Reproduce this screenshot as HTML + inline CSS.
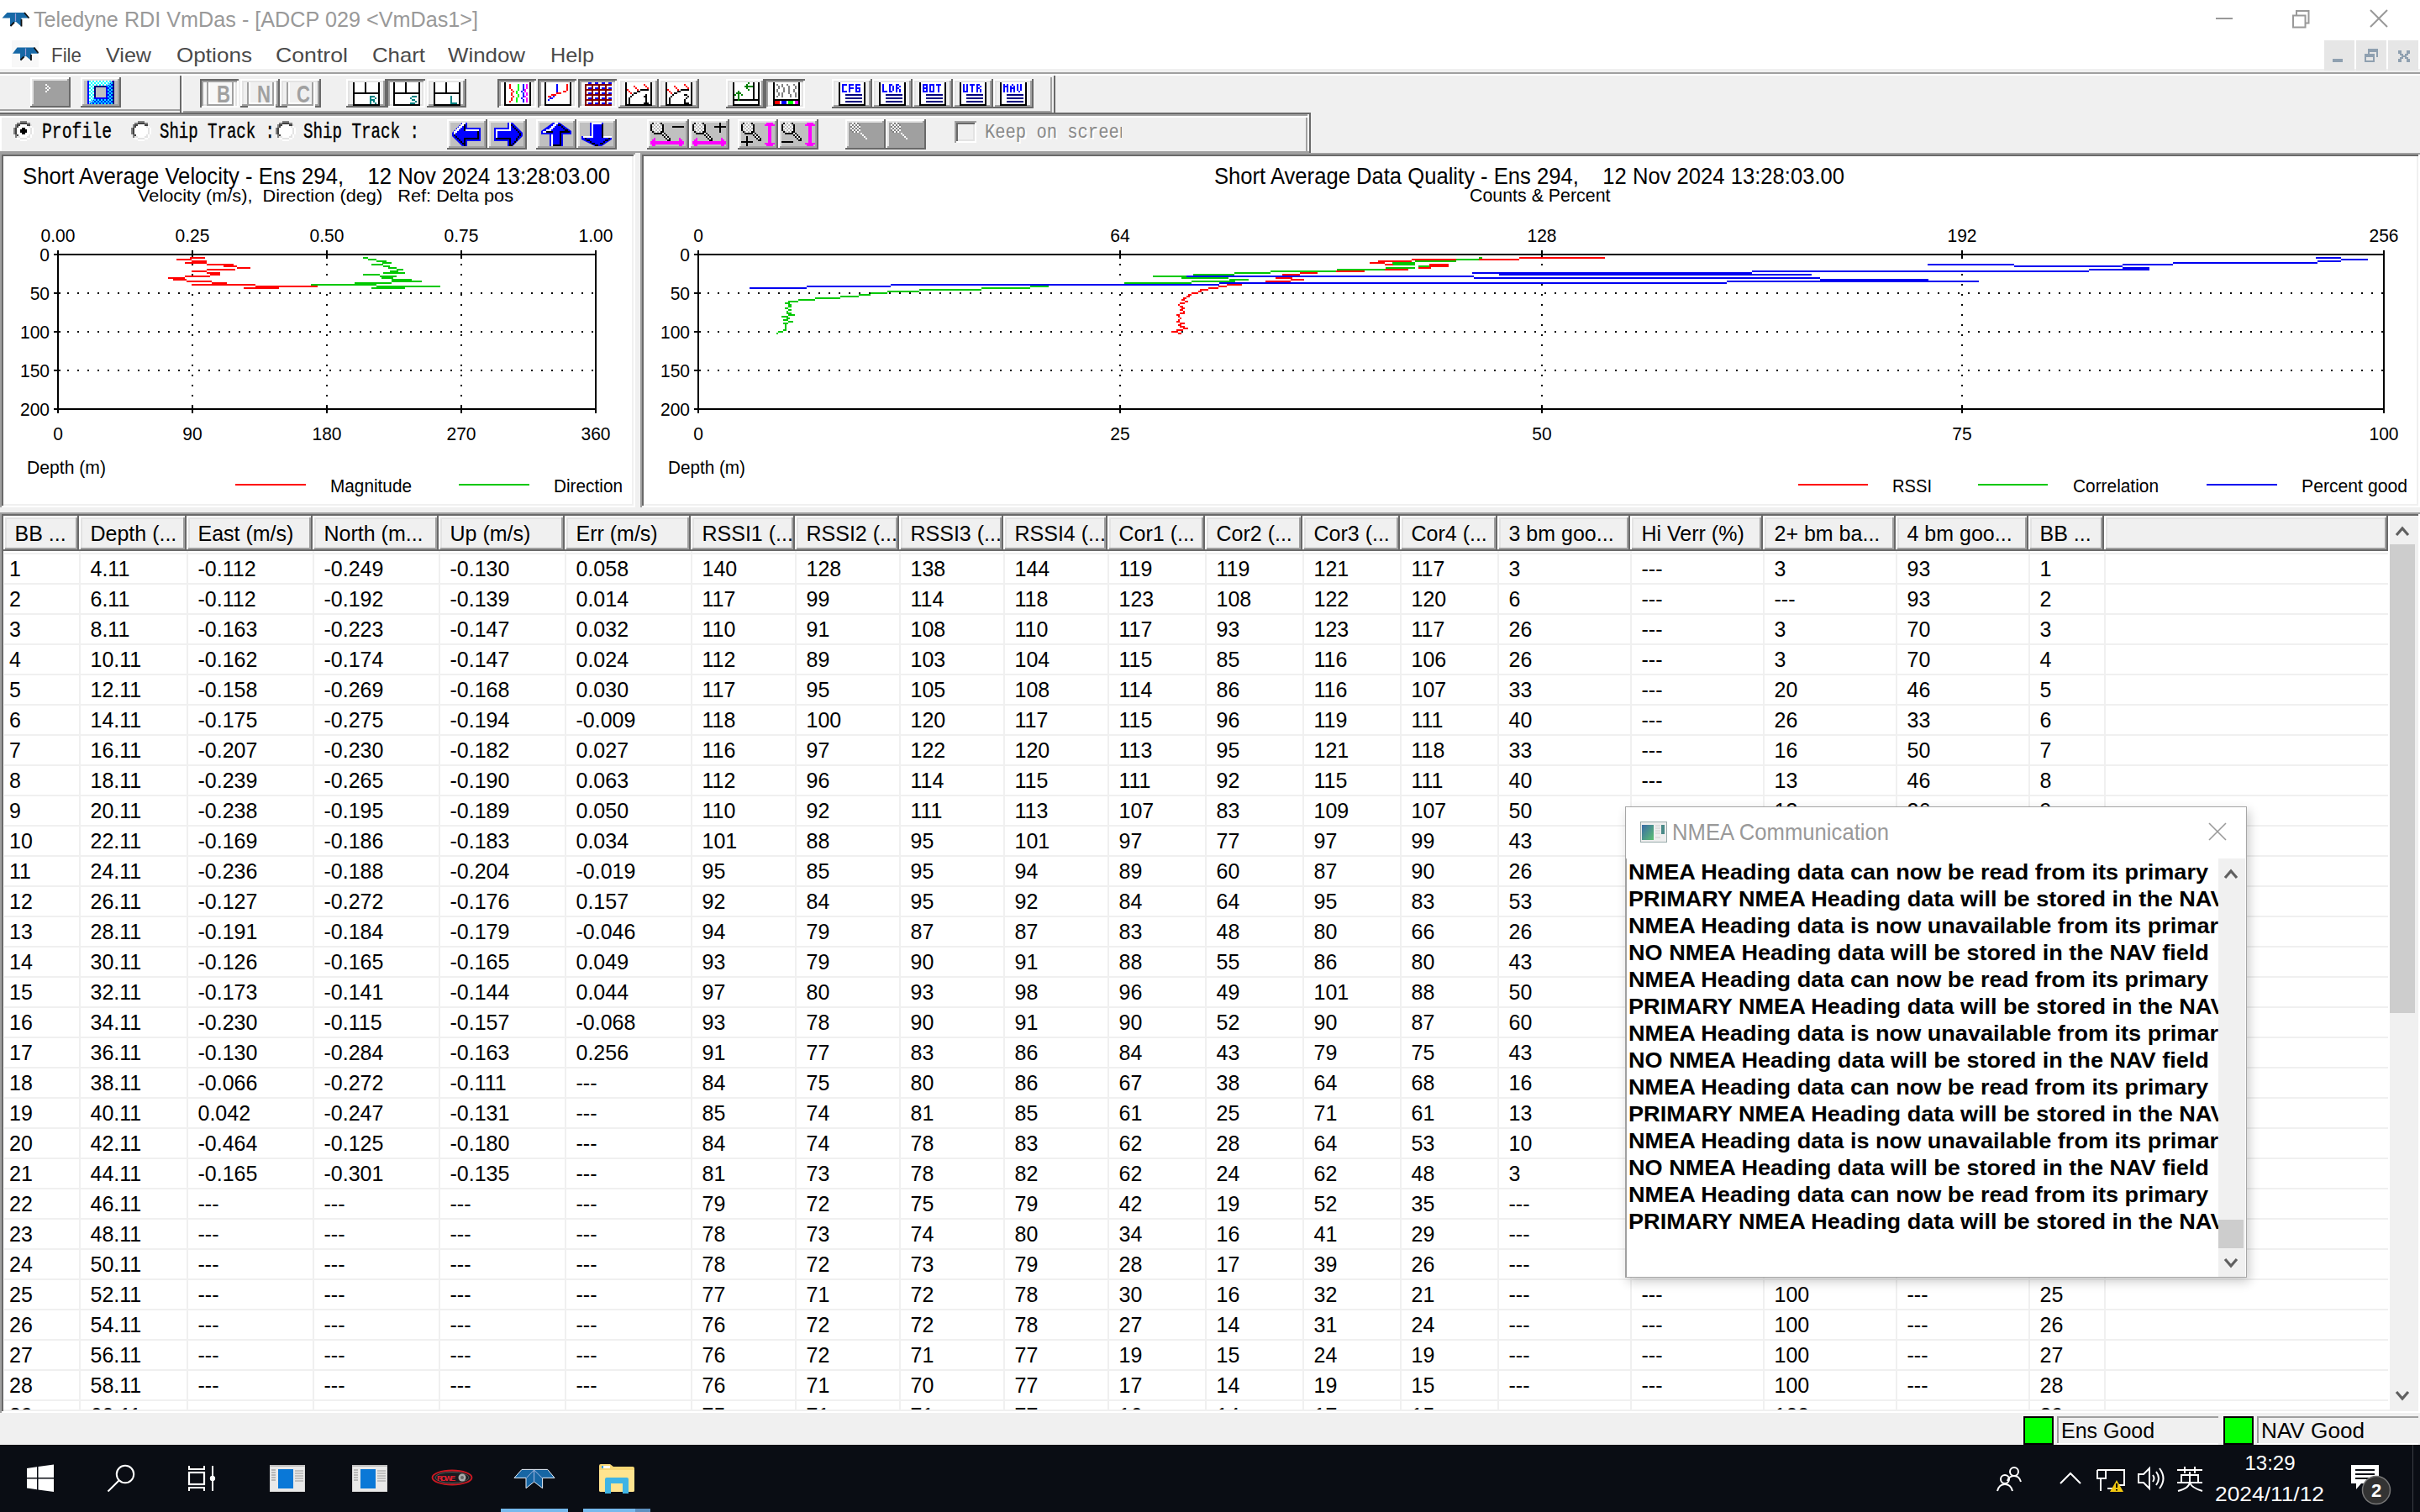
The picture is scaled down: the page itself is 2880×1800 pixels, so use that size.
<!DOCTYPE html><html><head><meta charset="utf-8"><style>*{margin:0;padding:0}html,body{width:2880px;height:1800px;overflow:hidden;background:#fff;font-family:"Liberation Sans", sans-serif}
.r{position:absolute}.t{position:absolute;white-space:pre;line-height:1;color:#000}</style></head><body><div class="r" style="left:0px;top:0px;width:2880px;height:82px;background:#fff;"></div><div class="r" style="left:0px;top:82px;width:2880px;height:4px;background:#f0f0f0;"></div><div class="r" style="left:0px;top:86px;width:2880px;height:2px;background:#a0a0a0;"></div><div class="r" style="left:0px;top:88px;width:2880px;height:2px;background:#fff;"></div><div class="r" style="left:0px;top:90px;width:2880px;height:92px;background:#f0f0f0;"></div><svg class="r" style="left:2px;top:13px" width="34" height="20" viewBox="0 0 34 20"><path d="M0.5 8.5 L6.5 2 H27 L32.5 8.5 H23.5 V18.5 L16.5 12.5 L10 18.5 V8.5 Z" fill="#1668a6"/><path d="M16.5 3 V12" stroke="#9a9ad8" stroke-width="1.2"/><path d="M27 2 L32.5 8.5 M23.5 10 V18.5 M10.5 18 L15 13.5" fill="none" stroke="#111" stroke-width="1.8"/></svg><div class="t" style="left:40.00px;top:10.84px;font-size:25px;color:#999;transform:scale(1.0081,1.0000);transform-origin:0 21.16px;">Teledyne RDI VmDas - [ADCP 029 &lt;VmDas1&gt;]</div><div class="r" style="left:2637px;top:21px;width:20px;height:2px;background:#999;"></div><svg class="r" style="left:2726px;top:10px" width="24" height="24" viewBox="0 0 24 24"><path d="M3 8.5 H17.5 V22.5 H3 Z M7 8 V3 H21.5 V17.5 H17.5" fill="none" stroke="#999" stroke-width="2"/></svg><svg class="r" style="left:2819px;top:10px" width="24" height="24" viewBox="0 0 24 24"><path d="M2 2 L22 22 M22 2 L2 22" stroke="#999" stroke-width="2"/></svg><svg class="r" style="left:14px;top:48px" width="32" height="32" viewBox="0 0 32 32"><rect width="32" height="32" fill="#f8f8f8"/><path d="M1 15.8 L6.5 8.5 H26.5 L32 15.8 H23 V24 L16.5 18.5 L10 24 V15.8 Z" fill="#1668a6"/><path d="M16.5 9.5 V18" stroke="#9a9ad8" stroke-width="1.2"/><path d="M26.5 8.5 L31.5 15 M23 17 V24 M10.5 23.5 L14.5 19.5" fill="none" stroke="#111" stroke-width="1.8"/></svg><div class="t" style="left:61.00px;top:53.68px;font-size:24px;color:#4a4a4a;transform:scale(0.9308,1.0000);transform-origin:0 20.32px;">File</div><div class="t" style="left:126.00px;top:53.68px;font-size:24px;color:#4a4a4a;transform:scale(1.0467,1.0000);transform-origin:0 20.32px;">View</div><div class="t" style="left:209.50px;top:53.68px;font-size:24px;color:#4a4a4a;transform:scale(1.0881,1.0000);transform-origin:0 20.32px;">Options</div><div class="t" style="left:328.00px;top:53.68px;font-size:24px;color:#4a4a4a;transform:scale(1.1115,1.0000);transform-origin:0 20.32px;">Control</div><div class="t" style="left:443.00px;top:53.68px;font-size:24px;color:#4a4a4a;transform:scale(1.0734,1.0000);transform-origin:0 20.32px;">Chart</div><div class="t" style="left:532.60px;top:53.68px;font-size:24px;color:#4a4a4a;transform:scale(1.0777,1.0000);transform-origin:0 20.32px;">Window</div><div class="t" style="left:654.60px;top:53.68px;font-size:24px;color:#4a4a4a;transform:scale(1.0534,1.0000);transform-origin:0 20.32px;">Help</div><div class="r" style="left:2766px;top:48px;width:36px;height:36px;background:#e6e6e6;"></div><div class="r" style="left:2804px;top:48px;width:36px;height:36px;background:#e6e6e6;"></div><div class="r" style="left:2842px;top:48px;width:36px;height:36px;background:#e6e6e6;"></div><div class="r" style="left:2776px;top:70px;width:12px;height:4px;background:#8fa0b0;"></div><svg class="r" style="left:2814px;top:58px" width="16" height="16" viewBox="0 0 16 16" fill="#8fa0b0"><path d="M4 0 H16 V10 H14 V4 H6 V6 H4 Z"/><path d="M0 6 H12 V16 H0 Z M2 10 V14 H10 V10 Z" fill-rule="evenodd"/></svg><svg class="r" style="left:2854px;top:60px" width="14" height="14" viewBox="0 0 14 14" fill="#8fa0b0"><rect x="0" y="0" width="2" height="2"/><rect x="2" y="0" width="2" height="2"/><rect x="10" y="0" width="2" height="2"/><rect x="12" y="0" width="2" height="2"/><rect x="0" y="2" width="2" height="2"/><rect x="2" y="2" width="2" height="2"/><rect x="10" y="2" width="2" height="2"/><rect x="12" y="2" width="2" height="2"/><rect x="2" y="4" width="2" height="2"/><rect x="4" y="4" width="2" height="2"/><rect x="8" y="4" width="2" height="2"/><rect x="10" y="4" width="2" height="2"/><rect x="4" y="6" width="2" height="2"/><rect x="6" y="6" width="2" height="2"/><rect x="8" y="6" width="2" height="2"/><rect x="2" y="8" width="2" height="2"/><rect x="4" y="8" width="2" height="2"/><rect x="8" y="8" width="2" height="2"/><rect x="10" y="8" width="2" height="2"/><rect x="0" y="10" width="2" height="2"/><rect x="2" y="10" width="2" height="2"/><rect x="10" y="10" width="2" height="2"/><rect x="12" y="10" width="2" height="2"/><rect x="0" y="12" width="2" height="2"/><rect x="2" y="12" width="2" height="2"/><rect x="10" y="12" width="2" height="2"/><rect x="12" y="12" width="2" height="2"/></svg><div class="r" style="left:214px;top:90px;width:2px;height:44px;background:#696969;"></div><div class="r" style="left:0px;top:130px;width:214px;height:2px;background:#a0a0a0;"></div><div class="r" style="left:216px;top:90px;width:2px;height:44px;background:#fff;"></div><div class="r" style="left:1250px;top:92px;width:2px;height:40px;background:#a0a0a0;"></div><div class="r" style="left:1254px;top:90px;width:2px;height:44px;background:#696969;"></div><div class="r" style="left:218px;top:132px;width:1034px;height:2px;background:#a0a0a0;"></div><div class="r" style="left:0px;top:134px;width:1560px;height:2px;background:#696969;"></div><div class="r" style="left:0px;top:136px;width:1556px;height:2px;background:#a0a0a0;"></div><div class="r" style="left:0px;top:138px;width:1556px;height:2px;background:#fff;"></div><div class="r" style="left:0px;top:140px;width:2px;height:40px;background:#fff;"></div><div class="r" style="left:1554px;top:140px;width:2px;height:40px;background:#a0a0a0;"></div><div class="r" style="left:1556px;top:138px;width:2px;height:42px;background:#fff;"></div><div class="r" style="left:1558px;top:134px;width:2px;height:48px;background:#696969;"></div><div class="r" style="left:0px;top:180px;width:1558px;height:2px;background:#a0a0a0;"></div><div class="r" style="left:36px;top:92px;width:48px;height:36px;background:#a0a0a0;box-shadow:inset -2px -2px #696969,inset 2px 2px #fff,inset -4px -4px #a0a0a0,inset 4px 4px #e3e3e3;"></div><svg class="r" style="left:36px;top:92px" width="48" height="36" viewBox="0 0 48 36"><rect x="18" y="8" width="2" height="2" fill="#fff"/><rect x="20" y="10" width="2" height="2" fill="#fff"/><rect x="22" y="12" width="2" height="2" fill="#fff"/><rect x="20" y="14" width="2" height="2" fill="#fff"/><rect x="18" y="16" width="2" height="2" fill="#fff"/><rect x="18" y="12" width="2" height="2" fill="#fff"/></svg><div class="r" style="left:96px;top:92px;width:48px;height:36px;background:#c0c0c0;box-shadow:inset -2px -2px #696969,inset 2px 2px #fff,inset -4px -4px #a0a0a0,inset 4px 4px #e3e3e3;"></div><svg class="r" style="left:96px;top:92px" width="48" height="36" viewBox="0 0 48 36"><defs><pattern id="pw" width="4" height="4" patternUnits="userSpaceOnUse" x="10" y="4"><rect width="4" height="4" fill="#fff"/><rect width="2" height="2" fill="#00ffff"/><rect x="2" y="2" width="2" height="2" fill="#00ffff"/></pattern><pattern id="pb" width="4" height="4" patternUnits="userSpaceOnUse" x="10" y="4"><rect width="4" height="4" fill="#0000ff"/><rect width="2" height="2" fill="#00ffff"/><rect x="2" y="2" width="2" height="2" fill="#00ffff"/></pattern></defs><rect x="10" y="4" width="28" height="28" fill="url(#pb)"/><path d="M10 4 H38 L10 32 Z" fill="url(#pw)"/><rect x="8" y="4" width="2" height="28" fill="#0000ff"/><rect x="38" y="4" width="2" height="28" fill="#000080"/><rect x="16" y="10" width="16" height="16" fill="#0000ff"/><path d="M16 10 H30 V12 H18 V24 H16 Z" fill="#000080"/><rect x="18" y="12" width="12" height="12" fill="#c0c0c0"/></svg><div class="r" style="left:238px;top:94px;width:46px;height:34px;background:#f7f7f7;box-shadow:inset 2px 2px #696969,inset -2px -2px #fff,inset 4px 4px #a0a0a0,inset -4px -4px #e3e3e3;"></div><svg class="r" style="left:238px;top:94px" width="46" height="34" viewBox="0 0 46 34"><path d="M9 4 V31 H39 V4" fill="none" stroke="#a0a0a0" stroke-width="2"/><path d="M11 4 V29 H37" fill="none" stroke="#fff" stroke-width="2"/><path d="M41 4 V33 H9" fill="none" stroke="#fff" stroke-width="2"/></svg><div class="t" style="left:258.00px;top:99.99px;font-size:26px;color:#a0a0a0;font-weight:bold;transform:scale(0.8521,1.1181);transform-origin:0 22.01px;">B</div><div class="r" style="left:286px;top:94px;width:47px;height:34px;background:#f0f0f0;box-shadow:inset -2px -2px #696969,inset 2px 2px #fff,inset -4px -4px #a0a0a0,inset 4px 4px #e3e3e3;"></div><svg class="r" style="left:286px;top:94px" width="47" height="34" viewBox="0 0 47 34"><path d="M9 4 V31 H39 V4" fill="none" stroke="#a0a0a0" stroke-width="2"/><path d="M11 4 V29 H37" fill="none" stroke="#fff" stroke-width="2"/><path d="M41 4 V33 H9" fill="none" stroke="#fff" stroke-width="2"/></svg><div class="t" style="left:306.00px;top:99.99px;font-size:26px;color:#a0a0a0;font-weight:bold;transform:scale(0.8521,1.1181);transform-origin:0 22.01px;">N</div><div class="r" style="left:333px;top:94px;width:49px;height:34px;background:#f0f0f0;box-shadow:inset -2px -2px #696969,inset 2px 2px #fff,inset -4px -4px #a0a0a0,inset 4px 4px #e3e3e3;"></div><svg class="r" style="left:333px;top:94px" width="49" height="34" viewBox="0 0 49 34"><path d="M9 4 V31 H39 V4" fill="none" stroke="#a0a0a0" stroke-width="2"/><path d="M11 4 V29 H37" fill="none" stroke="#fff" stroke-width="2"/><path d="M41 4 V33 H9" fill="none" stroke="#fff" stroke-width="2"/></svg><div class="t" style="left:353.00px;top:99.99px;font-size:26px;color:#a0a0a0;font-weight:bold;transform:scale(0.8521,1.1181);transform-origin:0 22.01px;">C</div><div class="r" style="left:412px;top:94px;width:48px;height:34px;background:#f0f0f0;box-shadow:inset -2px -2px #696969,inset 2px 2px #fff,inset -4px -4px #a0a0a0,inset 4px 4px #e3e3e3;"></div><svg class="r" style="left:412px;top:94px" width="48" height="34" viewBox="0 0 48 34"><rect x="8" y="4" width="32" height="28" fill="#fff"/><rect x="8" y="4" width="2" height="28" fill="#000"/><rect x="38" y="4" width="2" height="28" fill="#000"/><rect x="8" y="30" width="32" height="2" fill="#000"/><rect x="8" y="16" width="32" height="2" fill="#000"/><rect x="22" y="4" width="2" height="12" fill="#000"/><rect x="28" y="20" width="2" height="2" fill="#008080"/><rect x="30" y="20" width="2" height="2" fill="#008080"/><rect x="32" y="20" width="2" height="2" fill="#008080"/><rect x="28" y="22" width="2" height="2" fill="#008080"/><rect x="34" y="22" width="2" height="2" fill="#008080"/><rect x="28" y="24" width="2" height="2" fill="#008080"/><rect x="30" y="24" width="2" height="2" fill="#008080"/><rect x="32" y="24" width="2" height="2" fill="#008080"/><rect x="28" y="26" width="2" height="2" fill="#008080"/><rect x="32" y="26" width="2" height="2" fill="#008080"/><rect x="28" y="28" width="2" height="2" fill="#008080"/><rect x="34" y="28" width="2" height="2" fill="#008080"/></svg><div class="r" style="left:460px;top:94px;width:46px;height:34px;background:#f7f7f7;box-shadow:inset 2px 2px #696969,inset -2px -2px #fff,inset 4px 4px #a0a0a0,inset -4px -4px #e3e3e3;"></div><svg class="r" style="left:460px;top:94px" width="46" height="34" viewBox="0 0 46 34"><rect x="8" y="4" width="32" height="28" fill="#fff"/><rect x="8" y="4" width="2" height="28" fill="#000"/><rect x="38" y="4" width="2" height="28" fill="#000"/><rect x="8" y="30" width="32" height="2" fill="#000"/><rect x="8" y="16" width="32" height="2" fill="#000"/><rect x="22" y="4" width="2" height="12" fill="#000"/><rect x="30" y="20" width="2" height="2" fill="#008080"/><rect x="32" y="20" width="2" height="2" fill="#008080"/><rect x="34" y="20" width="2" height="2" fill="#008080"/><rect x="28" y="22" width="2" height="2" fill="#008080"/><rect x="30" y="24" width="2" height="2" fill="#008080"/><rect x="32" y="24" width="2" height="2" fill="#008080"/><rect x="34" y="26" width="2" height="2" fill="#008080"/><rect x="28" y="28" width="2" height="2" fill="#008080"/><rect x="30" y="28" width="2" height="2" fill="#008080"/><rect x="32" y="28" width="2" height="2" fill="#008080"/></svg><div class="r" style="left:508px;top:94px;width:47px;height:34px;background:#f0f0f0;box-shadow:inset -2px -2px #696969,inset 2px 2px #fff,inset -4px -4px #a0a0a0,inset 4px 4px #e3e3e3;"></div><svg class="r" style="left:508px;top:94px" width="47" height="34" viewBox="0 0 47 34"><rect x="8" y="4" width="32" height="28" fill="#fff"/><rect x="8" y="4" width="2" height="28" fill="#000"/><rect x="38" y="4" width="2" height="28" fill="#000"/><rect x="8" y="30" width="32" height="2" fill="#000"/><rect x="8" y="16" width="32" height="2" fill="#000"/><rect x="22" y="4" width="2" height="12" fill="#000"/><rect x="28" y="20" width="2" height="2" fill="#008080"/><rect x="28" y="22" width="2" height="2" fill="#008080"/><rect x="28" y="24" width="2" height="2" fill="#008080"/><rect x="28" y="26" width="2" height="2" fill="#008080"/><rect x="28" y="28" width="2" height="2" fill="#008080"/><rect x="30" y="28" width="2" height="2" fill="#008080"/><rect x="32" y="28" width="2" height="2" fill="#008080"/><rect x="34" y="28" width="2" height="2" fill="#008080"/></svg><div class="r" style="left:592px;top:94px;width:46px;height:34px;background:#f7f7f7;box-shadow:inset 2px 2px #696969,inset -2px -2px #fff,inset 4px 4px #a0a0a0,inset -4px -4px #e3e3e3;"></div><svg class="r" style="left:592px;top:94px" width="46" height="34" viewBox="0 0 46 34"><rect x="8" y="4" width="32" height="28" fill="#fff"/><rect x="8" y="4" width="2" height="28" fill="#000"/><rect x="38" y="4" width="2" height="28" fill="#000"/><rect x="8" y="30" width="32" height="2" fill="#000"/><rect x="14" y="6" width="2" height="6" fill="#ff0000"/><rect x="16" y="12" width="2" height="2" fill="#ff0000"/><rect x="18" y="14" width="2" height="2" fill="#ff0000"/><rect x="16" y="16" width="2" height="4" fill="#ff0000"/><rect x="18" y="20" width="2" height="2" fill="#ff0000"/><rect x="16" y="22" width="2" height="4" fill="#ff0000"/><rect x="14" y="26" width="2" height="2" fill="#ff0000"/><rect x="24" y="6" width="2" height="8" fill="#00ff00"/><rect x="22" y="14" width="2" height="4" fill="#00ff00"/><rect x="24" y="18" width="2" height="4" fill="#00ff00"/><rect x="22" y="22" width="2" height="6" fill="#00ff00"/><rect x="30" y="6" width="2" height="8" fill="#0000ff"/><rect x="28" y="14" width="2" height="2" fill="#0000ff"/><rect x="30" y="16" width="2" height="6" fill="#0000ff"/><rect x="28" y="22" width="2" height="2" fill="#0000ff"/><rect x="30" y="24" width="2" height="4" fill="#0000ff"/><rect x="34" y="6" width="2" height="6" fill="#ff00ff"/><rect x="32" y="12" width="2" height="4" fill="#ff00ff"/><rect x="34" y="16" width="2" height="4" fill="#ff00ff"/><rect x="32" y="20" width="2" height="2" fill="#ff00ff"/><rect x="34" y="22" width="2" height="6" fill="#ff00ff"/></svg><div class="r" style="left:640px;top:94px;width:46px;height:34px;background:#f7f7f7;box-shadow:inset 2px 2px #696969,inset -2px -2px #fff,inset 4px 4px #a0a0a0,inset -4px -4px #e3e3e3;"></div><svg class="r" style="left:640px;top:94px" width="46" height="34" viewBox="0 0 46 34"><rect x="8" y="4" width="32" height="28" fill="#fff"/><rect x="8" y="4" width="2" height="28" fill="#000"/><rect x="38" y="4" width="2" height="28" fill="#000"/><rect x="8" y="30" width="32" height="2" fill="#000"/><rect x="22" y="6" width="2" height="10" fill="#0000ff"/><rect x="34" y="6" width="2" height="8" fill="#ff0000"/><rect x="30" y="14" width="4" height="2" fill="#ff0000"/><rect x="22" y="16" width="6" height="2" fill="#ff0000"/><rect x="16" y="18" width="6" height="2" fill="#ff0000"/><rect x="12" y="20" width="4" height="2" fill="#ff0000"/><rect x="18" y="20" width="2" height="2" fill="#0000ff"/><rect x="14" y="22" width="4" height="2" fill="#0000ff"/><rect x="12" y="24" width="2" height="2" fill="#0000ff"/></svg><div class="r" style="left:688px;top:94px;width:46px;height:34px;background:#f7f7f7;box-shadow:inset 2px 2px #696969,inset -2px -2px #fff,inset 4px 4px #a0a0a0,inset -4px -4px #e3e3e3;"></div><svg class="r" style="left:688px;top:94px" width="46" height="34" viewBox="0 0 46 34"><rect x="8" y="6" width="32" height="26" fill="#800000"/><rect x="12" y="4" width="4" height="2" fill="#0000ff"/><rect x="10" y="8" width="6" height="4" fill="#fff"/><rect x="12" y="10" width="4" height="2" fill="#0000ff"/><rect x="10" y="14" width="6" height="4" fill="#fff"/><rect x="12" y="16" width="4" height="2" fill="#0000ff"/><rect x="10" y="20" width="6" height="4" fill="#fff"/><rect x="12" y="22" width="4" height="2" fill="#0000ff"/><rect x="10" y="26" width="6" height="4" fill="#fff"/><rect x="12" y="28" width="4" height="2" fill="#0000ff"/><rect x="20" y="4" width="4" height="2" fill="#0000ff"/><rect x="18" y="8" width="6" height="4" fill="#fff"/><rect x="20" y="10" width="4" height="2" fill="#0000ff"/><rect x="18" y="14" width="6" height="4" fill="#fff"/><rect x="20" y="16" width="4" height="2" fill="#0000ff"/><rect x="18" y="20" width="6" height="4" fill="#fff"/><rect x="20" y="22" width="4" height="2" fill="#0000ff"/><rect x="18" y="26" width="6" height="4" fill="#fff"/><rect x="20" y="28" width="4" height="2" fill="#0000ff"/><rect x="28" y="4" width="4" height="2" fill="#0000ff"/><rect x="26" y="8" width="6" height="4" fill="#fff"/><rect x="28" y="10" width="4" height="2" fill="#0000ff"/><rect x="26" y="14" width="6" height="4" fill="#fff"/><rect x="28" y="16" width="4" height="2" fill="#0000ff"/><rect x="26" y="20" width="6" height="4" fill="#fff"/><rect x="28" y="22" width="4" height="2" fill="#0000ff"/><rect x="26" y="26" width="6" height="4" fill="#fff"/><rect x="28" y="28" width="4" height="2" fill="#0000ff"/><rect x="36" y="4" width="4" height="2" fill="#0000ff"/><rect x="34" y="8" width="6" height="4" fill="#fff"/><rect x="36" y="10" width="4" height="2" fill="#0000ff"/><rect x="34" y="14" width="6" height="4" fill="#fff"/><rect x="36" y="16" width="4" height="2" fill="#0000ff"/><rect x="34" y="20" width="6" height="4" fill="#fff"/><rect x="36" y="22" width="4" height="2" fill="#0000ff"/><rect x="34" y="26" width="6" height="4" fill="#fff"/><rect x="36" y="28" width="4" height="2" fill="#0000ff"/></svg><div class="r" style="left:736px;top:94px;width:48px;height:35px;background:#f0f0f0;box-shadow:inset -2px -2px #696969,inset 2px 2px #fff,inset -4px -4px #a0a0a0,inset 4px 4px #e3e3e3;"></div><svg class="r" style="left:736px;top:94px" width="48" height="35" viewBox="0 0 48 35"><rect x="8" y="4" width="32" height="28" fill="#fff"/><rect x="8" y="4" width="2" height="28" fill="#000"/><rect x="38" y="4" width="2" height="28" fill="#000"/><rect x="8" y="30" width="32" height="2" fill="#000"/><rect x="10" y="12" width="2" height="2" fill="#ff0000"/><rect x="12" y="14" width="2" height="2" fill="#ff0000"/><rect x="14" y="16" width="2" height="2" fill="#ff0000"/><rect x="18" y="8" width="2" height="2" fill="#ff0000"/><rect x="20" y="10" width="2" height="2" fill="#ff0000"/><rect x="22" y="12" width="2" height="2" fill="#ff0000"/><rect x="30" y="6" width="2" height="2" fill="#ff0000"/><rect x="32" y="8" width="2" height="2" fill="#ff0000"/><rect x="34" y="10" width="2" height="2" fill="#ff0000"/><rect x="16" y="18" width="2" height="2" fill="#000"/><rect x="14" y="20" width="2" height="2" fill="#000"/><rect x="12" y="22" width="2" height="8" fill="#000"/><rect x="18" y="16" width="4" height="2" fill="#000"/><rect x="22" y="14" width="4" height="2" fill="#000"/><rect x="26" y="12" width="10" height="2" fill="#000"/><rect x="32" y="18" width="2" height="12" fill="#000"/><rect x="30" y="20" width="2" height="2" fill="#000"/><rect x="30" y="28" width="6" height="2" fill="#000"/></svg><div class="r" style="left:784px;top:94px;width:48px;height:35px;background:#f0f0f0;box-shadow:inset -2px -2px #696969,inset 2px 2px #fff,inset -4px -4px #a0a0a0,inset 4px 4px #e3e3e3;"></div><svg class="r" style="left:784px;top:94px" width="48" height="35" viewBox="0 0 48 35"><rect x="8" y="4" width="32" height="28" fill="#fff"/><rect x="8" y="4" width="2" height="28" fill="#000"/><rect x="38" y="4" width="2" height="28" fill="#000"/><rect x="8" y="30" width="32" height="2" fill="#000"/><rect x="10" y="12" width="2" height="2" fill="#ff0000"/><rect x="12" y="14" width="2" height="2" fill="#ff0000"/><rect x="14" y="16" width="2" height="2" fill="#ff0000"/><rect x="18" y="8" width="2" height="2" fill="#ff0000"/><rect x="20" y="10" width="2" height="2" fill="#ff0000"/><rect x="22" y="12" width="2" height="2" fill="#ff0000"/><rect x="30" y="6" width="2" height="2" fill="#ff0000"/><rect x="32" y="8" width="2" height="2" fill="#ff0000"/><rect x="34" y="10" width="2" height="2" fill="#ff0000"/><rect x="16" y="18" width="2" height="2" fill="#000"/><rect x="14" y="20" width="2" height="2" fill="#000"/><rect x="12" y="22" width="2" height="8" fill="#000"/><rect x="18" y="16" width="4" height="2" fill="#000"/><rect x="22" y="14" width="4" height="2" fill="#000"/><rect x="26" y="12" width="10" height="2" fill="#000"/><rect x="30" y="18" width="4" height="2" fill="#000"/><rect x="34" y="20" width="2" height="2" fill="#000"/><rect x="32" y="22" width="2" height="2" fill="#000"/><rect x="30" y="24" width="2" height="4" fill="#000"/><rect x="30" y="28" width="6" height="2" fill="#000"/></svg><div class="r" style="left:864px;top:94px;width:46px;height:35px;background:#f0f0f0;box-shadow:inset -2px -2px #696969,inset 2px 2px #fff,inset -4px -4px #a0a0a0,inset 4px 4px #e3e3e3;"></div><svg class="r" style="left:864px;top:94px" width="46" height="35" viewBox="0 0 46 35"><rect x="8" y="4" width="32" height="28" fill="#fff"/><rect x="8" y="4" width="2" height="28" fill="#000"/><rect x="38" y="4" width="2" height="28" fill="#000"/><rect x="8" y="30" width="32" height="2" fill="#000"/><rect x="8" y="24" width="32" height="2" fill="#000"/><rect x="32" y="4" width="2" height="22" fill="#000"/><rect x="14" y="14" width="2" height="12" fill="#008000"/><rect x="12" y="16" width="2" height="2" fill="#008000"/><rect x="16" y="16" width="2" height="2" fill="#008000"/><rect x="10" y="18" width="2" height="2" fill="#008000"/><rect x="18" y="18" width="2" height="2" fill="#008000"/><rect x="22" y="8" width="10" height="2" fill="#008000"/><rect x="24" y="6" width="2" height="2" fill="#008000"/><rect x="24" y="10" width="2" height="2" fill="#008000"/><rect x="26" y="4" width="2" height="2" fill="#008000"/><rect x="26" y="12" width="2" height="2" fill="#008000"/></svg><div class="r" style="left:910px;top:94px;width:48px;height:35px;background:#f7f7f7;box-shadow:inset 2px 2px #696969,inset -2px -2px #fff,inset 4px 4px #a0a0a0,inset -4px -4px #e3e3e3;"></div><svg class="r" style="left:910px;top:94px" width="48" height="35" viewBox="0 0 48 35"><rect x="10" y="4" width="32" height="28" fill="#fff"/><rect x="10" y="4" width="2" height="28" fill="#000"/><rect x="40" y="4" width="2" height="28" fill="#000"/><rect x="10" y="30" width="32" height="2" fill="#000"/><rect x="10" y="24" width="32" height="2" fill="#000"/><rect x="12" y="26" width="6" height="4" fill="#ff0000"/><rect x="20" y="26" width="6" height="4" fill="#0000ff"/><rect x="28" y="26" width="6" height="4" fill="#00ff00"/><rect x="36" y="26" width="4" height="4" fill="#ff00ff"/><rect x="14" y="6" width="2" height="2" fill="#808080"/><rect x="16" y="8" width="2" height="4" fill="#808080"/><rect x="14" y="12" width="2" height="4" fill="#808080"/><rect x="16" y="16" width="2" height="4" fill="#808080"/><rect x="14" y="20" width="2" height="2" fill="#808080"/><rect x="20" y="6" width="2" height="4" fill="#808080"/><rect x="22" y="10" width="2" height="6" fill="#808080"/><rect x="20" y="16" width="2" height="6" fill="#808080"/><rect x="26" y="6" width="2" height="2" fill="#808080"/><rect x="28" y="8" width="2" height="10" fill="#808080"/><rect x="30" y="18" width="2" height="4" fill="#808080"/><rect x="34" y="6" width="2" height="2" fill="#808080"/><rect x="36" y="8" width="2" height="4" fill="#808080"/><rect x="34" y="12" width="2" height="4" fill="#808080"/><rect x="36" y="16" width="2" height="6" fill="#808080"/></svg><div class="r" style="left:990px;top:94px;width:48px;height:35px;background:#f0f0f0;box-shadow:inset -2px -2px #696969,inset 2px 2px #fff,inset -4px -4px #a0a0a0,inset 4px 4px #e3e3e3;"></div><svg class="r" style="left:990px;top:94px" width="48" height="35" viewBox="0 0 48 35"><rect x="8" y="4" width="32" height="28" fill="#fff"/><rect x="8" y="4" width="2" height="28" fill="#000"/><rect x="38" y="4" width="2" height="28" fill="#000"/><rect x="8" y="30" width="32" height="2" fill="#000"/><rect x="12" y="6" width="2" height="2" fill="#0000ff"/><rect x="14" y="6" width="2" height="2" fill="#0000ff"/><rect x="16" y="6" width="2" height="2" fill="#0000ff"/><rect x="12" y="8" width="2" height="2" fill="#0000ff"/><rect x="12" y="10" width="2" height="2" fill="#0000ff"/><rect x="12" y="12" width="2" height="2" fill="#0000ff"/><rect x="12" y="14" width="2" height="2" fill="#0000ff"/><rect x="14" y="14" width="2" height="2" fill="#0000ff"/><rect x="16" y="14" width="2" height="2" fill="#0000ff"/><rect x="20" y="6" width="2" height="2" fill="#0000ff"/><rect x="22" y="6" width="2" height="2" fill="#0000ff"/><rect x="24" y="6" width="2" height="2" fill="#0000ff"/><rect x="20" y="8" width="2" height="2" fill="#0000ff"/><rect x="20" y="10" width="2" height="2" fill="#0000ff"/><rect x="22" y="10" width="2" height="2" fill="#0000ff"/><rect x="24" y="10" width="2" height="2" fill="#0000ff"/><rect x="20" y="12" width="2" height="2" fill="#0000ff"/><rect x="20" y="14" width="2" height="2" fill="#0000ff"/><rect x="28" y="6" width="2" height="2" fill="#0000ff"/><rect x="30" y="6" width="2" height="2" fill="#0000ff"/><rect x="32" y="6" width="2" height="2" fill="#0000ff"/><rect x="28" y="8" width="2" height="2" fill="#0000ff"/><rect x="28" y="10" width="2" height="2" fill="#0000ff"/><rect x="30" y="10" width="2" height="2" fill="#0000ff"/><rect x="32" y="10" width="2" height="2" fill="#0000ff"/><rect x="28" y="12" width="2" height="2" fill="#0000ff"/><rect x="32" y="12" width="2" height="2" fill="#0000ff"/><rect x="28" y="14" width="2" height="2" fill="#0000ff"/><rect x="30" y="14" width="2" height="2" fill="#0000ff"/><rect x="32" y="14" width="2" height="2" fill="#0000ff"/><rect x="16" y="18" width="20" height="2" fill="#000080"/><rect x="16" y="22" width="20" height="2" fill="#000080"/><rect x="16" y="26" width="20" height="2" fill="#000080"/></svg><div class="r" style="left:1038px;top:94px;width:48px;height:35px;background:#f0f0f0;box-shadow:inset -2px -2px #696969,inset 2px 2px #fff,inset -4px -4px #a0a0a0,inset 4px 4px #e3e3e3;"></div><svg class="r" style="left:1038px;top:94px" width="48" height="35" viewBox="0 0 48 35"><rect x="8" y="4" width="32" height="28" fill="#fff"/><rect x="8" y="4" width="2" height="28" fill="#000"/><rect x="38" y="4" width="2" height="28" fill="#000"/><rect x="8" y="30" width="32" height="2" fill="#000"/><rect x="12" y="6" width="2" height="2" fill="#0000ff"/><rect x="12" y="8" width="2" height="2" fill="#0000ff"/><rect x="12" y="10" width="2" height="2" fill="#0000ff"/><rect x="12" y="12" width="2" height="2" fill="#0000ff"/><rect x="12" y="14" width="2" height="2" fill="#0000ff"/><rect x="14" y="14" width="2" height="2" fill="#0000ff"/><rect x="16" y="14" width="2" height="2" fill="#0000ff"/><rect x="20" y="6" width="2" height="2" fill="#0000ff"/><rect x="22" y="6" width="2" height="2" fill="#0000ff"/><rect x="20" y="8" width="2" height="2" fill="#0000ff"/><rect x="24" y="8" width="2" height="2" fill="#0000ff"/><rect x="20" y="10" width="2" height="2" fill="#0000ff"/><rect x="24" y="10" width="2" height="2" fill="#0000ff"/><rect x="20" y="12" width="2" height="2" fill="#0000ff"/><rect x="24" y="12" width="2" height="2" fill="#0000ff"/><rect x="20" y="14" width="2" height="2" fill="#0000ff"/><rect x="22" y="14" width="2" height="2" fill="#0000ff"/><rect x="28" y="6" width="2" height="2" fill="#0000ff"/><rect x="30" y="6" width="2" height="2" fill="#0000ff"/><rect x="28" y="8" width="2" height="2" fill="#0000ff"/><rect x="32" y="8" width="2" height="2" fill="#0000ff"/><rect x="28" y="10" width="2" height="2" fill="#0000ff"/><rect x="30" y="10" width="2" height="2" fill="#0000ff"/><rect x="28" y="12" width="2" height="2" fill="#0000ff"/><rect x="32" y="12" width="2" height="2" fill="#0000ff"/><rect x="28" y="14" width="2" height="2" fill="#0000ff"/><rect x="32" y="14" width="2" height="2" fill="#0000ff"/><rect x="16" y="18" width="20" height="2" fill="#000080"/><rect x="16" y="22" width="20" height="2" fill="#000080"/><rect x="16" y="26" width="20" height="2" fill="#000080"/></svg><div class="r" style="left:1086px;top:94px;width:48px;height:35px;background:#f0f0f0;box-shadow:inset -2px -2px #696969,inset 2px 2px #fff,inset -4px -4px #a0a0a0,inset 4px 4px #e3e3e3;"></div><svg class="r" style="left:1086px;top:94px" width="48" height="35" viewBox="0 0 48 35"><rect x="8" y="4" width="32" height="28" fill="#fff"/><rect x="8" y="4" width="2" height="28" fill="#000"/><rect x="38" y="4" width="2" height="28" fill="#000"/><rect x="8" y="30" width="32" height="2" fill="#000"/><rect x="12" y="6" width="2" height="2" fill="#0000ff"/><rect x="14" y="6" width="2" height="2" fill="#0000ff"/><rect x="16" y="6" width="2" height="2" fill="#0000ff"/><rect x="12" y="8" width="2" height="2" fill="#0000ff"/><rect x="16" y="8" width="2" height="2" fill="#0000ff"/><rect x="12" y="10" width="2" height="2" fill="#0000ff"/><rect x="14" y="10" width="2" height="2" fill="#0000ff"/><rect x="16" y="10" width="2" height="2" fill="#0000ff"/><rect x="12" y="12" width="2" height="2" fill="#0000ff"/><rect x="16" y="12" width="2" height="2" fill="#0000ff"/><rect x="12" y="14" width="2" height="2" fill="#0000ff"/><rect x="14" y="14" width="2" height="2" fill="#0000ff"/><rect x="16" y="14" width="2" height="2" fill="#0000ff"/><rect x="20" y="6" width="2" height="2" fill="#0000ff"/><rect x="22" y="6" width="2" height="2" fill="#0000ff"/><rect x="24" y="6" width="2" height="2" fill="#0000ff"/><rect x="20" y="8" width="2" height="2" fill="#0000ff"/><rect x="24" y="8" width="2" height="2" fill="#0000ff"/><rect x="20" y="10" width="2" height="2" fill="#0000ff"/><rect x="24" y="10" width="2" height="2" fill="#0000ff"/><rect x="20" y="12" width="2" height="2" fill="#0000ff"/><rect x="24" y="12" width="2" height="2" fill="#0000ff"/><rect x="20" y="14" width="2" height="2" fill="#0000ff"/><rect x="22" y="14" width="2" height="2" fill="#0000ff"/><rect x="24" y="14" width="2" height="2" fill="#0000ff"/><rect x="28" y="6" width="2" height="2" fill="#0000ff"/><rect x="30" y="6" width="2" height="2" fill="#0000ff"/><rect x="32" y="6" width="2" height="2" fill="#0000ff"/><rect x="30" y="8" width="2" height="2" fill="#0000ff"/><rect x="30" y="10" width="2" height="2" fill="#0000ff"/><rect x="30" y="12" width="2" height="2" fill="#0000ff"/><rect x="30" y="14" width="2" height="2" fill="#0000ff"/><rect x="16" y="18" width="20" height="2" fill="#000080"/><rect x="16" y="22" width="20" height="2" fill="#000080"/><rect x="16" y="26" width="20" height="2" fill="#000080"/></svg><div class="r" style="left:1134px;top:94px;width:48px;height:35px;background:#f0f0f0;box-shadow:inset -2px -2px #696969,inset 2px 2px #fff,inset -4px -4px #a0a0a0,inset 4px 4px #e3e3e3;"></div><svg class="r" style="left:1134px;top:94px" width="48" height="35" viewBox="0 0 48 35"><rect x="8" y="4" width="32" height="28" fill="#fff"/><rect x="8" y="4" width="2" height="28" fill="#000"/><rect x="38" y="4" width="2" height="28" fill="#000"/><rect x="8" y="30" width="32" height="2" fill="#000"/><rect x="12" y="6" width="2" height="2" fill="#0000ff"/><rect x="16" y="6" width="2" height="2" fill="#0000ff"/><rect x="12" y="8" width="2" height="2" fill="#0000ff"/><rect x="16" y="8" width="2" height="2" fill="#0000ff"/><rect x="12" y="10" width="2" height="2" fill="#0000ff"/><rect x="16" y="10" width="2" height="2" fill="#0000ff"/><rect x="12" y="12" width="2" height="2" fill="#0000ff"/><rect x="16" y="12" width="2" height="2" fill="#0000ff"/><rect x="12" y="14" width="2" height="2" fill="#0000ff"/><rect x="14" y="14" width="2" height="2" fill="#0000ff"/><rect x="16" y="14" width="2" height="2" fill="#0000ff"/><rect x="20" y="6" width="2" height="2" fill="#0000ff"/><rect x="22" y="6" width="2" height="2" fill="#0000ff"/><rect x="24" y="6" width="2" height="2" fill="#0000ff"/><rect x="22" y="8" width="2" height="2" fill="#0000ff"/><rect x="22" y="10" width="2" height="2" fill="#0000ff"/><rect x="22" y="12" width="2" height="2" fill="#0000ff"/><rect x="22" y="14" width="2" height="2" fill="#0000ff"/><rect x="28" y="6" width="2" height="2" fill="#0000ff"/><rect x="30" y="6" width="2" height="2" fill="#0000ff"/><rect x="28" y="8" width="2" height="2" fill="#0000ff"/><rect x="32" y="8" width="2" height="2" fill="#0000ff"/><rect x="28" y="10" width="2" height="2" fill="#0000ff"/><rect x="30" y="10" width="2" height="2" fill="#0000ff"/><rect x="28" y="12" width="2" height="2" fill="#0000ff"/><rect x="32" y="12" width="2" height="2" fill="#0000ff"/><rect x="28" y="14" width="2" height="2" fill="#0000ff"/><rect x="32" y="14" width="2" height="2" fill="#0000ff"/><rect x="16" y="18" width="20" height="2" fill="#000080"/><rect x="16" y="22" width="20" height="2" fill="#000080"/><rect x="16" y="26" width="20" height="2" fill="#000080"/></svg><div class="r" style="left:1182px;top:94px;width:48px;height:35px;background:#f0f0f0;box-shadow:inset -2px -2px #696969,inset 2px 2px #fff,inset -4px -4px #a0a0a0,inset 4px 4px #e3e3e3;"></div><svg class="r" style="left:1182px;top:94px" width="48" height="35" viewBox="0 0 48 35"><rect x="8" y="4" width="32" height="28" fill="#fff"/><rect x="8" y="4" width="2" height="28" fill="#000"/><rect x="38" y="4" width="2" height="28" fill="#000"/><rect x="8" y="30" width="32" height="2" fill="#000"/><rect x="12" y="6" width="2" height="2" fill="#0000ff"/><rect x="16" y="6" width="2" height="2" fill="#0000ff"/><rect x="12" y="8" width="2" height="2" fill="#0000ff"/><rect x="14" y="8" width="2" height="2" fill="#0000ff"/><rect x="16" y="8" width="2" height="2" fill="#0000ff"/><rect x="12" y="10" width="2" height="2" fill="#0000ff"/><rect x="16" y="10" width="2" height="2" fill="#0000ff"/><rect x="12" y="12" width="2" height="2" fill="#0000ff"/><rect x="16" y="12" width="2" height="2" fill="#0000ff"/><rect x="12" y="14" width="2" height="2" fill="#0000ff"/><rect x="16" y="14" width="2" height="2" fill="#0000ff"/><rect x="22" y="6" width="2" height="2" fill="#0000ff"/><rect x="20" y="8" width="2" height="2" fill="#0000ff"/><rect x="24" y="8" width="2" height="2" fill="#0000ff"/><rect x="20" y="10" width="2" height="2" fill="#0000ff"/><rect x="22" y="10" width="2" height="2" fill="#0000ff"/><rect x="24" y="10" width="2" height="2" fill="#0000ff"/><rect x="20" y="12" width="2" height="2" fill="#0000ff"/><rect x="24" y="12" width="2" height="2" fill="#0000ff"/><rect x="20" y="14" width="2" height="2" fill="#0000ff"/><rect x="24" y="14" width="2" height="2" fill="#0000ff"/><rect x="28" y="6" width="2" height="2" fill="#0000ff"/><rect x="32" y="6" width="2" height="2" fill="#0000ff"/><rect x="28" y="8" width="2" height="2" fill="#0000ff"/><rect x="32" y="8" width="2" height="2" fill="#0000ff"/><rect x="28" y="10" width="2" height="2" fill="#0000ff"/><rect x="32" y="10" width="2" height="2" fill="#0000ff"/><rect x="28" y="12" width="2" height="2" fill="#0000ff"/><rect x="32" y="12" width="2" height="2" fill="#0000ff"/><rect x="30" y="14" width="2" height="2" fill="#0000ff"/><rect x="16" y="18" width="20" height="2" fill="#000080"/><rect x="16" y="22" width="20" height="2" fill="#000080"/><rect x="16" y="26" width="20" height="2" fill="#000080"/></svg><svg class="r" style="left:16px;top:144px" width="24" height="24" viewBox="0 0 24 24" shape-rendering="crispEdges"><rect x="8" y="0" width="2" height="2" fill="#808080"/><rect x="10" y="0" width="2" height="2" fill="#808080"/><rect x="12" y="0" width="2" height="2" fill="#808080"/><rect x="14" y="0" width="2" height="2" fill="#808080"/><rect x="4" y="2" width="2" height="2" fill="#808080"/><rect x="6" y="2" width="2" height="2" fill="#808080"/><rect x="8" y="2" width="2" height="2" fill="#404040"/><rect x="10" y="2" width="2" height="2" fill="#404040"/><rect x="12" y="2" width="2" height="2" fill="#404040"/><rect x="14" y="2" width="2" height="2" fill="#404040"/><rect x="16" y="2" width="2" height="2" fill="#808080"/><rect x="18" y="2" width="2" height="2" fill="#808080"/><rect x="2" y="4" width="2" height="2" fill="#808080"/><rect x="4" y="4" width="2" height="2" fill="#404040"/><rect x="6" y="4" width="2" height="2" fill="#404040"/><rect x="8" y="4" width="2" height="2" fill="#ffffff"/><rect x="10" y="4" width="2" height="2" fill="#ffffff"/><rect x="12" y="4" width="2" height="2" fill="#ffffff"/><rect x="14" y="4" width="2" height="2" fill="#ffffff"/><rect x="16" y="4" width="2" height="2" fill="#404040"/><rect x="18" y="4" width="2" height="2" fill="#404040"/><rect x="20" y="4" width="2" height="2" fill="#e3e3e3"/><rect x="2" y="6" width="2" height="2" fill="#808080"/><rect x="4" y="6" width="2" height="2" fill="#404040"/><rect x="6" y="6" width="2" height="2" fill="#ffffff"/><rect x="8" y="6" width="2" height="2" fill="#ffffff"/><rect x="10" y="6" width="2" height="2" fill="#ffffff"/><rect x="12" y="6" width="2" height="2" fill="#ffffff"/><rect x="14" y="6" width="2" height="2" fill="#ffffff"/><rect x="16" y="6" width="2" height="2" fill="#ffffff"/><rect x="18" y="6" width="2" height="2" fill="#e3e3e3"/><rect x="20" y="6" width="2" height="2" fill="#ffffff"/><rect x="0" y="8" width="2" height="2" fill="#808080"/><rect x="2" y="8" width="2" height="2" fill="#404040"/><rect x="4" y="8" width="2" height="2" fill="#ffffff"/><rect x="6" y="8" width="2" height="2" fill="#ffffff"/><rect x="8" y="8" width="2" height="2" fill="#ffffff"/><rect x="10" y="8" width="2" height="2" fill="#ffffff"/><rect x="12" y="8" width="2" height="2" fill="#ffffff"/><rect x="14" y="8" width="2" height="2" fill="#ffffff"/><rect x="16" y="8" width="2" height="2" fill="#ffffff"/><rect x="18" y="8" width="2" height="2" fill="#ffffff"/><rect x="20" y="8" width="2" height="2" fill="#e3e3e3"/><rect x="22" y="8" width="2" height="2" fill="#ffffff"/><rect x="0" y="10" width="2" height="2" fill="#808080"/><rect x="2" y="10" width="2" height="2" fill="#404040"/><rect x="4" y="10" width="2" height="2" fill="#ffffff"/><rect x="6" y="10" width="2" height="2" fill="#ffffff"/><rect x="8" y="10" width="2" height="2" fill="#ffffff"/><rect x="10" y="10" width="2" height="2" fill="#ffffff"/><rect x="12" y="10" width="2" height="2" fill="#ffffff"/><rect x="14" y="10" width="2" height="2" fill="#ffffff"/><rect x="16" y="10" width="2" height="2" fill="#ffffff"/><rect x="18" y="10" width="2" height="2" fill="#ffffff"/><rect x="20" y="10" width="2" height="2" fill="#e3e3e3"/><rect x="22" y="10" width="2" height="2" fill="#ffffff"/><rect x="0" y="12" width="2" height="2" fill="#808080"/><rect x="2" y="12" width="2" height="2" fill="#404040"/><rect x="4" y="12" width="2" height="2" fill="#ffffff"/><rect x="6" y="12" width="2" height="2" fill="#ffffff"/><rect x="8" y="12" width="2" height="2" fill="#ffffff"/><rect x="10" y="12" width="2" height="2" fill="#ffffff"/><rect x="12" y="12" width="2" height="2" fill="#ffffff"/><rect x="14" y="12" width="2" height="2" fill="#ffffff"/><rect x="16" y="12" width="2" height="2" fill="#ffffff"/><rect x="18" y="12" width="2" height="2" fill="#ffffff"/><rect x="20" y="12" width="2" height="2" fill="#e3e3e3"/><rect x="22" y="12" width="2" height="2" fill="#ffffff"/><rect x="0" y="14" width="2" height="2" fill="#808080"/><rect x="2" y="14" width="2" height="2" fill="#404040"/><rect x="4" y="14" width="2" height="2" fill="#ffffff"/><rect x="6" y="14" width="2" height="2" fill="#ffffff"/><rect x="8" y="14" width="2" height="2" fill="#ffffff"/><rect x="10" y="14" width="2" height="2" fill="#ffffff"/><rect x="12" y="14" width="2" height="2" fill="#ffffff"/><rect x="14" y="14" width="2" height="2" fill="#ffffff"/><rect x="16" y="14" width="2" height="2" fill="#ffffff"/><rect x="18" y="14" width="2" height="2" fill="#ffffff"/><rect x="20" y="14" width="2" height="2" fill="#e3e3e3"/><rect x="22" y="14" width="2" height="2" fill="#ffffff"/><rect x="2" y="16" width="2" height="2" fill="#808080"/><rect x="4" y="16" width="2" height="2" fill="#404040"/><rect x="6" y="16" width="2" height="2" fill="#ffffff"/><rect x="8" y="16" width="2" height="2" fill="#ffffff"/><rect x="10" y="16" width="2" height="2" fill="#ffffff"/><rect x="12" y="16" width="2" height="2" fill="#ffffff"/><rect x="14" y="16" width="2" height="2" fill="#ffffff"/><rect x="16" y="16" width="2" height="2" fill="#ffffff"/><rect x="18" y="16" width="2" height="2" fill="#e3e3e3"/><rect x="20" y="16" width="2" height="2" fill="#ffffff"/><rect x="2" y="18" width="2" height="2" fill="#808080"/><rect x="4" y="18" width="2" height="2" fill="#e3e3e3"/><rect x="6" y="18" width="2" height="2" fill="#e3e3e3"/><rect x="8" y="18" width="2" height="2" fill="#ffffff"/><rect x="10" y="18" width="2" height="2" fill="#ffffff"/><rect x="12" y="18" width="2" height="2" fill="#ffffff"/><rect x="14" y="18" width="2" height="2" fill="#ffffff"/><rect x="16" y="18" width="2" height="2" fill="#e3e3e3"/><rect x="18" y="18" width="2" height="2" fill="#e3e3e3"/><rect x="20" y="18" width="2" height="2" fill="#ffffff"/><rect x="4" y="20" width="2" height="2" fill="#ffffff"/><rect x="6" y="20" width="2" height="2" fill="#ffffff"/><rect x="8" y="20" width="2" height="2" fill="#e3e3e3"/><rect x="10" y="20" width="2" height="2" fill="#e3e3e3"/><rect x="12" y="20" width="2" height="2" fill="#e3e3e3"/><rect x="14" y="20" width="2" height="2" fill="#e3e3e3"/><rect x="16" y="20" width="2" height="2" fill="#ffffff"/><rect x="18" y="20" width="2" height="2" fill="#ffffff"/><rect x="8" y="22" width="2" height="2" fill="#ffffff"/><rect x="10" y="22" width="2" height="2" fill="#ffffff"/><rect x="12" y="22" width="2" height="2" fill="#ffffff"/><rect x="14" y="22" width="2" height="2" fill="#ffffff"/><rect x="10" y="8" width="4" height="2" fill="#000"/><rect x="8" y="10" width="8" height="2" fill="#000"/><rect x="8" y="12" width="8" height="2" fill="#000"/><rect x="10" y="14" width="4" height="2" fill="#000"/></svg><svg class="r" style="left:156px;top:144px" width="24" height="24" viewBox="0 0 24 24" shape-rendering="crispEdges"><rect x="8" y="0" width="2" height="2" fill="#808080"/><rect x="10" y="0" width="2" height="2" fill="#808080"/><rect x="12" y="0" width="2" height="2" fill="#808080"/><rect x="14" y="0" width="2" height="2" fill="#808080"/><rect x="4" y="2" width="2" height="2" fill="#808080"/><rect x="6" y="2" width="2" height="2" fill="#808080"/><rect x="8" y="2" width="2" height="2" fill="#404040"/><rect x="10" y="2" width="2" height="2" fill="#404040"/><rect x="12" y="2" width="2" height="2" fill="#404040"/><rect x="14" y="2" width="2" height="2" fill="#404040"/><rect x="16" y="2" width="2" height="2" fill="#808080"/><rect x="18" y="2" width="2" height="2" fill="#808080"/><rect x="2" y="4" width="2" height="2" fill="#808080"/><rect x="4" y="4" width="2" height="2" fill="#404040"/><rect x="6" y="4" width="2" height="2" fill="#404040"/><rect x="8" y="4" width="2" height="2" fill="#ffffff"/><rect x="10" y="4" width="2" height="2" fill="#ffffff"/><rect x="12" y="4" width="2" height="2" fill="#ffffff"/><rect x="14" y="4" width="2" height="2" fill="#ffffff"/><rect x="16" y="4" width="2" height="2" fill="#404040"/><rect x="18" y="4" width="2" height="2" fill="#404040"/><rect x="20" y="4" width="2" height="2" fill="#e3e3e3"/><rect x="2" y="6" width="2" height="2" fill="#808080"/><rect x="4" y="6" width="2" height="2" fill="#404040"/><rect x="6" y="6" width="2" height="2" fill="#ffffff"/><rect x="8" y="6" width="2" height="2" fill="#ffffff"/><rect x="10" y="6" width="2" height="2" fill="#ffffff"/><rect x="12" y="6" width="2" height="2" fill="#ffffff"/><rect x="14" y="6" width="2" height="2" fill="#ffffff"/><rect x="16" y="6" width="2" height="2" fill="#ffffff"/><rect x="18" y="6" width="2" height="2" fill="#e3e3e3"/><rect x="20" y="6" width="2" height="2" fill="#ffffff"/><rect x="0" y="8" width="2" height="2" fill="#808080"/><rect x="2" y="8" width="2" height="2" fill="#404040"/><rect x="4" y="8" width="2" height="2" fill="#ffffff"/><rect x="6" y="8" width="2" height="2" fill="#ffffff"/><rect x="8" y="8" width="2" height="2" fill="#ffffff"/><rect x="10" y="8" width="2" height="2" fill="#ffffff"/><rect x="12" y="8" width="2" height="2" fill="#ffffff"/><rect x="14" y="8" width="2" height="2" fill="#ffffff"/><rect x="16" y="8" width="2" height="2" fill="#ffffff"/><rect x="18" y="8" width="2" height="2" fill="#ffffff"/><rect x="20" y="8" width="2" height="2" fill="#e3e3e3"/><rect x="22" y="8" width="2" height="2" fill="#ffffff"/><rect x="0" y="10" width="2" height="2" fill="#808080"/><rect x="2" y="10" width="2" height="2" fill="#404040"/><rect x="4" y="10" width="2" height="2" fill="#ffffff"/><rect x="6" y="10" width="2" height="2" fill="#ffffff"/><rect x="8" y="10" width="2" height="2" fill="#ffffff"/><rect x="10" y="10" width="2" height="2" fill="#ffffff"/><rect x="12" y="10" width="2" height="2" fill="#ffffff"/><rect x="14" y="10" width="2" height="2" fill="#ffffff"/><rect x="16" y="10" width="2" height="2" fill="#ffffff"/><rect x="18" y="10" width="2" height="2" fill="#ffffff"/><rect x="20" y="10" width="2" height="2" fill="#e3e3e3"/><rect x="22" y="10" width="2" height="2" fill="#ffffff"/><rect x="0" y="12" width="2" height="2" fill="#808080"/><rect x="2" y="12" width="2" height="2" fill="#404040"/><rect x="4" y="12" width="2" height="2" fill="#ffffff"/><rect x="6" y="12" width="2" height="2" fill="#ffffff"/><rect x="8" y="12" width="2" height="2" fill="#ffffff"/><rect x="10" y="12" width="2" height="2" fill="#ffffff"/><rect x="12" y="12" width="2" height="2" fill="#ffffff"/><rect x="14" y="12" width="2" height="2" fill="#ffffff"/><rect x="16" y="12" width="2" height="2" fill="#ffffff"/><rect x="18" y="12" width="2" height="2" fill="#ffffff"/><rect x="20" y="12" width="2" height="2" fill="#e3e3e3"/><rect x="22" y="12" width="2" height="2" fill="#ffffff"/><rect x="0" y="14" width="2" height="2" fill="#808080"/><rect x="2" y="14" width="2" height="2" fill="#404040"/><rect x="4" y="14" width="2" height="2" fill="#ffffff"/><rect x="6" y="14" width="2" height="2" fill="#ffffff"/><rect x="8" y="14" width="2" height="2" fill="#ffffff"/><rect x="10" y="14" width="2" height="2" fill="#ffffff"/><rect x="12" y="14" width="2" height="2" fill="#ffffff"/><rect x="14" y="14" width="2" height="2" fill="#ffffff"/><rect x="16" y="14" width="2" height="2" fill="#ffffff"/><rect x="18" y="14" width="2" height="2" fill="#ffffff"/><rect x="20" y="14" width="2" height="2" fill="#e3e3e3"/><rect x="22" y="14" width="2" height="2" fill="#ffffff"/><rect x="2" y="16" width="2" height="2" fill="#808080"/><rect x="4" y="16" width="2" height="2" fill="#404040"/><rect x="6" y="16" width="2" height="2" fill="#ffffff"/><rect x="8" y="16" width="2" height="2" fill="#ffffff"/><rect x="10" y="16" width="2" height="2" fill="#ffffff"/><rect x="12" y="16" width="2" height="2" fill="#ffffff"/><rect x="14" y="16" width="2" height="2" fill="#ffffff"/><rect x="16" y="16" width="2" height="2" fill="#ffffff"/><rect x="18" y="16" width="2" height="2" fill="#e3e3e3"/><rect x="20" y="16" width="2" height="2" fill="#ffffff"/><rect x="2" y="18" width="2" height="2" fill="#808080"/><rect x="4" y="18" width="2" height="2" fill="#e3e3e3"/><rect x="6" y="18" width="2" height="2" fill="#e3e3e3"/><rect x="8" y="18" width="2" height="2" fill="#ffffff"/><rect x="10" y="18" width="2" height="2" fill="#ffffff"/><rect x="12" y="18" width="2" height="2" fill="#ffffff"/><rect x="14" y="18" width="2" height="2" fill="#ffffff"/><rect x="16" y="18" width="2" height="2" fill="#e3e3e3"/><rect x="18" y="18" width="2" height="2" fill="#e3e3e3"/><rect x="20" y="18" width="2" height="2" fill="#ffffff"/><rect x="4" y="20" width="2" height="2" fill="#ffffff"/><rect x="6" y="20" width="2" height="2" fill="#ffffff"/><rect x="8" y="20" width="2" height="2" fill="#e3e3e3"/><rect x="10" y="20" width="2" height="2" fill="#e3e3e3"/><rect x="12" y="20" width="2" height="2" fill="#e3e3e3"/><rect x="14" y="20" width="2" height="2" fill="#e3e3e3"/><rect x="16" y="20" width="2" height="2" fill="#ffffff"/><rect x="18" y="20" width="2" height="2" fill="#ffffff"/><rect x="8" y="22" width="2" height="2" fill="#ffffff"/><rect x="10" y="22" width="2" height="2" fill="#ffffff"/><rect x="12" y="22" width="2" height="2" fill="#ffffff"/><rect x="14" y="22" width="2" height="2" fill="#ffffff"/></svg><svg class="r" style="left:328px;top:144px" width="24" height="24" viewBox="0 0 24 24" shape-rendering="crispEdges"><rect x="8" y="0" width="2" height="2" fill="#808080"/><rect x="10" y="0" width="2" height="2" fill="#808080"/><rect x="12" y="0" width="2" height="2" fill="#808080"/><rect x="14" y="0" width="2" height="2" fill="#808080"/><rect x="4" y="2" width="2" height="2" fill="#808080"/><rect x="6" y="2" width="2" height="2" fill="#808080"/><rect x="8" y="2" width="2" height="2" fill="#404040"/><rect x="10" y="2" width="2" height="2" fill="#404040"/><rect x="12" y="2" width="2" height="2" fill="#404040"/><rect x="14" y="2" width="2" height="2" fill="#404040"/><rect x="16" y="2" width="2" height="2" fill="#808080"/><rect x="18" y="2" width="2" height="2" fill="#808080"/><rect x="2" y="4" width="2" height="2" fill="#808080"/><rect x="4" y="4" width="2" height="2" fill="#404040"/><rect x="6" y="4" width="2" height="2" fill="#404040"/><rect x="8" y="4" width="2" height="2" fill="#ffffff"/><rect x="10" y="4" width="2" height="2" fill="#ffffff"/><rect x="12" y="4" width="2" height="2" fill="#ffffff"/><rect x="14" y="4" width="2" height="2" fill="#ffffff"/><rect x="16" y="4" width="2" height="2" fill="#404040"/><rect x="18" y="4" width="2" height="2" fill="#404040"/><rect x="20" y="4" width="2" height="2" fill="#e3e3e3"/><rect x="2" y="6" width="2" height="2" fill="#808080"/><rect x="4" y="6" width="2" height="2" fill="#404040"/><rect x="6" y="6" width="2" height="2" fill="#ffffff"/><rect x="8" y="6" width="2" height="2" fill="#ffffff"/><rect x="10" y="6" width="2" height="2" fill="#ffffff"/><rect x="12" y="6" width="2" height="2" fill="#ffffff"/><rect x="14" y="6" width="2" height="2" fill="#ffffff"/><rect x="16" y="6" width="2" height="2" fill="#ffffff"/><rect x="18" y="6" width="2" height="2" fill="#e3e3e3"/><rect x="20" y="6" width="2" height="2" fill="#ffffff"/><rect x="0" y="8" width="2" height="2" fill="#808080"/><rect x="2" y="8" width="2" height="2" fill="#404040"/><rect x="4" y="8" width="2" height="2" fill="#ffffff"/><rect x="6" y="8" width="2" height="2" fill="#ffffff"/><rect x="8" y="8" width="2" height="2" fill="#ffffff"/><rect x="10" y="8" width="2" height="2" fill="#ffffff"/><rect x="12" y="8" width="2" height="2" fill="#ffffff"/><rect x="14" y="8" width="2" height="2" fill="#ffffff"/><rect x="16" y="8" width="2" height="2" fill="#ffffff"/><rect x="18" y="8" width="2" height="2" fill="#ffffff"/><rect x="20" y="8" width="2" height="2" fill="#e3e3e3"/><rect x="22" y="8" width="2" height="2" fill="#ffffff"/><rect x="0" y="10" width="2" height="2" fill="#808080"/><rect x="2" y="10" width="2" height="2" fill="#404040"/><rect x="4" y="10" width="2" height="2" fill="#ffffff"/><rect x="6" y="10" width="2" height="2" fill="#ffffff"/><rect x="8" y="10" width="2" height="2" fill="#ffffff"/><rect x="10" y="10" width="2" height="2" fill="#ffffff"/><rect x="12" y="10" width="2" height="2" fill="#ffffff"/><rect x="14" y="10" width="2" height="2" fill="#ffffff"/><rect x="16" y="10" width="2" height="2" fill="#ffffff"/><rect x="18" y="10" width="2" height="2" fill="#ffffff"/><rect x="20" y="10" width="2" height="2" fill="#e3e3e3"/><rect x="22" y="10" width="2" height="2" fill="#ffffff"/><rect x="0" y="12" width="2" height="2" fill="#808080"/><rect x="2" y="12" width="2" height="2" fill="#404040"/><rect x="4" y="12" width="2" height="2" fill="#ffffff"/><rect x="6" y="12" width="2" height="2" fill="#ffffff"/><rect x="8" y="12" width="2" height="2" fill="#ffffff"/><rect x="10" y="12" width="2" height="2" fill="#ffffff"/><rect x="12" y="12" width="2" height="2" fill="#ffffff"/><rect x="14" y="12" width="2" height="2" fill="#ffffff"/><rect x="16" y="12" width="2" height="2" fill="#ffffff"/><rect x="18" y="12" width="2" height="2" fill="#ffffff"/><rect x="20" y="12" width="2" height="2" fill="#e3e3e3"/><rect x="22" y="12" width="2" height="2" fill="#ffffff"/><rect x="0" y="14" width="2" height="2" fill="#808080"/><rect x="2" y="14" width="2" height="2" fill="#404040"/><rect x="4" y="14" width="2" height="2" fill="#ffffff"/><rect x="6" y="14" width="2" height="2" fill="#ffffff"/><rect x="8" y="14" width="2" height="2" fill="#ffffff"/><rect x="10" y="14" width="2" height="2" fill="#ffffff"/><rect x="12" y="14" width="2" height="2" fill="#ffffff"/><rect x="14" y="14" width="2" height="2" fill="#ffffff"/><rect x="16" y="14" width="2" height="2" fill="#ffffff"/><rect x="18" y="14" width="2" height="2" fill="#ffffff"/><rect x="20" y="14" width="2" height="2" fill="#e3e3e3"/><rect x="22" y="14" width="2" height="2" fill="#ffffff"/><rect x="2" y="16" width="2" height="2" fill="#808080"/><rect x="4" y="16" width="2" height="2" fill="#404040"/><rect x="6" y="16" width="2" height="2" fill="#ffffff"/><rect x="8" y="16" width="2" height="2" fill="#ffffff"/><rect x="10" y="16" width="2" height="2" fill="#ffffff"/><rect x="12" y="16" width="2" height="2" fill="#ffffff"/><rect x="14" y="16" width="2" height="2" fill="#ffffff"/><rect x="16" y="16" width="2" height="2" fill="#ffffff"/><rect x="18" y="16" width="2" height="2" fill="#e3e3e3"/><rect x="20" y="16" width="2" height="2" fill="#ffffff"/><rect x="2" y="18" width="2" height="2" fill="#808080"/><rect x="4" y="18" width="2" height="2" fill="#e3e3e3"/><rect x="6" y="18" width="2" height="2" fill="#e3e3e3"/><rect x="8" y="18" width="2" height="2" fill="#ffffff"/><rect x="10" y="18" width="2" height="2" fill="#ffffff"/><rect x="12" y="18" width="2" height="2" fill="#ffffff"/><rect x="14" y="18" width="2" height="2" fill="#ffffff"/><rect x="16" y="18" width="2" height="2" fill="#e3e3e3"/><rect x="18" y="18" width="2" height="2" fill="#e3e3e3"/><rect x="20" y="18" width="2" height="2" fill="#ffffff"/><rect x="4" y="20" width="2" height="2" fill="#ffffff"/><rect x="6" y="20" width="2" height="2" fill="#ffffff"/><rect x="8" y="20" width="2" height="2" fill="#e3e3e3"/><rect x="10" y="20" width="2" height="2" fill="#e3e3e3"/><rect x="12" y="20" width="2" height="2" fill="#e3e3e3"/><rect x="14" y="20" width="2" height="2" fill="#e3e3e3"/><rect x="16" y="20" width="2" height="2" fill="#ffffff"/><rect x="18" y="20" width="2" height="2" fill="#ffffff"/><rect x="8" y="22" width="2" height="2" fill="#ffffff"/><rect x="10" y="22" width="2" height="2" fill="#ffffff"/><rect x="12" y="22" width="2" height="2" fill="#ffffff"/><rect x="14" y="22" width="2" height="2" fill="#ffffff"/></svg><div class="t" style="left:49.60px;top:148.67px;font-size:20px;font-family:'Liberation Mono', monospace;transform:scale(0.9880,1.2519);transform-origin:0 15.33px;-webkit-text-stroke:0.3px #000;">Profile</div><div class="t" style="left:189.50px;top:148.67px;font-size:20px;font-family:'Liberation Mono', monospace;transform:scale(0.9513,1.2898);transform-origin:0 15.33px;-webkit-text-stroke:0.3px #000;">Ship Track :</div><div class="t" style="left:361.00px;top:148.67px;font-size:20px;font-family:'Liberation Mono', monospace;transform:scale(0.9582,1.2898);transform-origin:0 15.33px;-webkit-text-stroke:0.3px #000;">Ship Track :</div><div class="r" style="left:532px;top:142px;width:48px;height:36px;background:#c0c0c0;box-shadow:inset -2px -2px #696969,inset 2px 2px #fff,inset -4px -4px #a0a0a0,inset 4px 4px #e3e3e3;"></div><svg class="r" style="left:532px;top:142px" width="48" height="36" viewBox="0 0 48 36"><path d="M6 16 L18 4 H24 V10 H40 V26 H24 V32 H18 L6 20 Z" fill="#0000ff"/><rect x="18" y="4" width="4" height="2" fill="#fff"/><rect x="16" y="6" width="4" height="2" fill="#fff"/><rect x="14" y="8" width="4" height="2" fill="#fff"/><rect x="12" y="10" width="4" height="2" fill="#fff"/><rect x="10" y="12" width="4" height="2" fill="#fff"/><rect x="8" y="14" width="4" height="2" fill="#fff"/><rect x="8" y="16" width="2" height="2" fill="#fff"/><rect x="22" y="12" width="16" height="2" fill="#fff"/><rect x="20" y="6" width="2" height="8" fill="#000"/><rect x="36" y="14" width="2" height="10" fill="#000"/><rect x="20" y="22" width="18" height="2" fill="#000"/><rect x="20" y="24" width="2" height="8" fill="#000"/><rect x="8" y="18" width="2" height="2" fill="#000"/><rect x="10" y="20" width="2" height="2" fill="#000"/><rect x="12" y="22" width="2" height="2" fill="#000"/><rect x="14" y="24" width="2" height="2" fill="#000"/><rect x="16" y="26" width="2" height="2" fill="#000"/><rect x="18" y="28" width="2" height="2" fill="#000"/></svg><div class="r" style="left:580px;top:142px;width:47px;height:36px;background:#c0c0c0;box-shadow:inset -2px -2px #696969,inset 2px 2px #fff,inset -4px -4px #a0a0a0,inset 4px 4px #e3e3e3;"></div><svg class="r" style="left:580px;top:142px" width="47" height="36" viewBox="0 0 47 36"><path d="M8 10 H24 V4 H30 L42 16 V20 L30 32 H24 V26 H8 Z" fill="#0000ff"/><rect x="26" y="4" width="2" height="10" fill="#fff"/><rect x="10" y="12" width="16" height="2" fill="#fff"/><rect x="10" y="14" width="2" height="8" fill="#fff"/><rect x="10" y="22" width="18" height="2" fill="#000"/><rect x="26" y="24" width="2" height="8" fill="#000"/><rect x="28" y="30" width="2" height="2" fill="#000"/><rect x="28" y="6" width="2" height="2" fill="#000"/><rect x="30" y="8" width="2" height="2" fill="#000"/><rect x="32" y="10" width="2" height="2" fill="#000"/><rect x="34" y="12" width="2" height="2" fill="#000"/><rect x="36" y="14" width="2" height="2" fill="#000"/><rect x="38" y="16" width="2" height="4" fill="#000"/><rect x="36" y="20" width="2" height="2" fill="#000"/><rect x="34" y="22" width="2" height="4" fill="#000"/><rect x="32" y="26" width="2" height="2" fill="#000"/><rect x="30" y="28" width="2" height="2" fill="#000"/></svg><div class="r" style="left:638px;top:142px;width:48px;height:36px;background:#c0c0c0;box-shadow:inset -2px -2px #696969,inset 2px 2px #fff,inset -4px -4px #a0a0a0,inset 4px 4px #e3e3e3;"></div><svg class="r" style="left:638px;top:142px" width="48" height="36" viewBox="0 0 48 36"><path d="M6 18 V14 L20 4 H28 L42 14 V18 H32 V32 H16 V18 Z" fill="#0000ff"/><rect x="22" y="4" width="4" height="2" fill="#fff"/><rect x="20" y="6" width="4" height="2" fill="#fff"/><rect x="18" y="8" width="4" height="2" fill="#fff"/><rect x="16" y="10" width="4" height="2" fill="#fff"/><rect x="12" y="12" width="6" height="2" fill="#fff"/><rect x="8" y="14" width="4" height="2" fill="#fff"/><rect x="18" y="18" width="2" height="14" fill="#fff"/><rect x="12" y="14" width="8" height="2" fill="#000"/><rect x="28" y="14" width="12" height="2" fill="#000"/><rect x="26" y="6" width="4" height="2" fill="#000"/><rect x="30" y="8" width="2" height="2" fill="#000"/><rect x="32" y="10" width="2" height="2" fill="#000"/><rect x="34" y="12" width="4" height="2" fill="#000"/><rect x="28" y="16" width="2" height="14" fill="#000"/><rect x="20" y="30" width="10" height="2" fill="#000"/></svg><div class="r" style="left:686px;top:142px;width:48px;height:36px;background:#c0c0c0;box-shadow:inset -2px -2px #696969,inset 2px 2px #fff,inset -4px -4px #a0a0a0,inset 4px 4px #e3e3e3;"></div><svg class="r" style="left:686px;top:142px" width="48" height="36" viewBox="0 0 48 36"><path d="M16 4 H32 V20 H42 V24 L30 32 H22 L6 24 V20 H16 Z" fill="#0000ff"/><rect x="18" y="4" width="12" height="2" fill="#fff"/><rect x="18" y="6" width="2" height="16" fill="#fff"/><rect x="8" y="20" width="10" height="2" fill="#fff"/><rect x="32" y="20" width="10" height="2" fill="#fff"/><rect x="30" y="6" width="2" height="16" fill="#000"/><rect x="10" y="22" width="2" height="2" fill="#000"/><rect x="12" y="24" width="4" height="2" fill="#000"/><rect x="16" y="26" width="2" height="2" fill="#000"/><rect x="18" y="28" width="4" height="2" fill="#000"/><rect x="22" y="30" width="4" height="2" fill="#000"/><rect x="38" y="22" width="2" height="2" fill="#000"/><rect x="34" y="24" width="4" height="2" fill="#000"/><rect x="32" y="26" width="2" height="2" fill="#000"/><rect x="28" y="28" width="4" height="2" fill="#000"/></svg><div class="r" style="left:770px;top:142px;width:50px;height:36px;background:#c0c0c0;box-shadow:inset -2px -2px #696969,inset 2px 2px #fff,inset -4px -4px #a0a0a0,inset 4px 4px #e3e3e3;"></div><svg class="r" style="left:770px;top:142px" width="50" height="36" viewBox="0 0 50 36"><rect x="6" y="4" width="2" height="2" fill="#b8b8b8"/><rect x="8" y="4" width="2" height="2" fill="#fff"/><rect x="10" y="4" width="2" height="2" fill="#b8b8b8"/><rect x="12" y="4" width="2" height="2" fill="#fff"/><rect x="14" y="4" width="2" height="2" fill="#b8b8b8"/><rect x="16" y="4" width="2" height="2" fill="#fff"/><rect x="6" y="6" width="2" height="2" fill="#fff"/><rect x="8" y="6" width="2" height="2" fill="#b8b8b8"/><rect x="10" y="6" width="2" height="2" fill="#fff"/><rect x="12" y="6" width="2" height="2" fill="#b8b8b8"/><rect x="14" y="6" width="2" height="2" fill="#fff"/><rect x="16" y="6" width="2" height="2" fill="#b8b8b8"/><rect x="6" y="8" width="2" height="2" fill="#b8b8b8"/><rect x="8" y="8" width="2" height="2" fill="#fff"/><rect x="10" y="8" width="2" height="2" fill="#b8b8b8"/><rect x="12" y="8" width="2" height="2" fill="#fff"/><rect x="14" y="8" width="2" height="2" fill="#b8b8b8"/><rect x="16" y="8" width="2" height="2" fill="#fff"/><rect x="6" y="10" width="2" height="2" fill="#fff"/><rect x="8" y="10" width="2" height="2" fill="#b8b8b8"/><rect x="10" y="10" width="2" height="2" fill="#fff"/><rect x="12" y="10" width="2" height="2" fill="#b8b8b8"/><rect x="14" y="10" width="2" height="2" fill="#fff"/><rect x="16" y="10" width="2" height="2" fill="#b8b8b8"/><rect x="6" y="12" width="2" height="2" fill="#b8b8b8"/><rect x="8" y="12" width="2" height="2" fill="#fff"/><rect x="10" y="12" width="2" height="2" fill="#b8b8b8"/><rect x="12" y="12" width="2" height="2" fill="#fff"/><rect x="14" y="12" width="2" height="2" fill="#b8b8b8"/><rect x="16" y="12" width="2" height="2" fill="#fff"/><rect x="6" y="14" width="2" height="2" fill="#fff"/><rect x="8" y="14" width="2" height="2" fill="#b8b8b8"/><rect x="10" y="14" width="2" height="2" fill="#fff"/><rect x="12" y="14" width="2" height="2" fill="#b8b8b8"/><rect x="14" y="14" width="2" height="2" fill="#fff"/><rect x="16" y="14" width="2" height="2" fill="#b8b8b8"/><rect x="6" y="4" width="2" height="2" fill="#000"/><rect x="16" y="4" width="2" height="2" fill="#000"/><rect x="4" y="6" width="2" height="8" fill="#000"/><rect x="18" y="6" width="2" height="10" fill="#000"/><rect x="6" y="14" width="2" height="2" fill="#000"/><rect x="16" y="14" width="2" height="2" fill="#000"/><rect x="8" y="16" width="10" height="2" fill="#000"/><rect x="18" y="16" width="2" height="2" fill="#fff"/><rect x="20" y="16" width="2" height="2" fill="#000"/><rect x="18" y="18" width="2" height="2" fill="#000"/><rect x="20" y="18" width="2" height="2" fill="#fff"/><rect x="22" y="18" width="2" height="2" fill="#000"/><rect x="20" y="20" width="2" height="2" fill="#000"/><rect x="22" y="20" width="2" height="2" fill="#fff"/><rect x="24" y="20" width="2" height="2" fill="#000"/><rect x="22" y="22" width="2" height="2" fill="#000"/><rect x="24" y="22" width="2" height="2" fill="#fff"/><rect x="26" y="22" width="2" height="2" fill="#000"/><rect x="24" y="24" width="4" height="2" fill="#000"/><rect x="4" y="4" width="2" height="2" fill="#c0c0c0"/><rect x="18" y="4" width="2" height="2" fill="#c0c0c0"/><rect x="4" y="14" width="2" height="2" fill="#c0c0c0"/><rect x="30" y="8" width="14" height="2" fill="#000"/><rect x="4" y="26" width="40" height="4" fill="#ff00ff"/><rect x="8" y="22" width="2" height="4" fill="#ff00ff"/><rect x="6" y="24" width="2" height="2" fill="#ff00ff"/><rect x="6" y="30" width="4" height="2" fill="#ff00ff"/><rect x="38" y="22" width="2" height="4" fill="#ff00ff"/><rect x="40" y="24" width="2" height="2" fill="#ff00ff"/><rect x="38" y="30" width="4" height="2" fill="#ff00ff"/></svg><div class="r" style="left:820px;top:142px;width:48px;height:36px;background:#c0c0c0;box-shadow:inset -2px -2px #696969,inset 2px 2px #fff,inset -4px -4px #a0a0a0,inset 4px 4px #e3e3e3;"></div><svg class="r" style="left:820px;top:142px" width="48" height="36" viewBox="0 0 48 36"><rect x="6" y="4" width="2" height="2" fill="#b8b8b8"/><rect x="8" y="4" width="2" height="2" fill="#fff"/><rect x="10" y="4" width="2" height="2" fill="#b8b8b8"/><rect x="12" y="4" width="2" height="2" fill="#fff"/><rect x="14" y="4" width="2" height="2" fill="#b8b8b8"/><rect x="16" y="4" width="2" height="2" fill="#fff"/><rect x="6" y="6" width="2" height="2" fill="#fff"/><rect x="8" y="6" width="2" height="2" fill="#b8b8b8"/><rect x="10" y="6" width="2" height="2" fill="#fff"/><rect x="12" y="6" width="2" height="2" fill="#b8b8b8"/><rect x="14" y="6" width="2" height="2" fill="#fff"/><rect x="16" y="6" width="2" height="2" fill="#b8b8b8"/><rect x="6" y="8" width="2" height="2" fill="#b8b8b8"/><rect x="8" y="8" width="2" height="2" fill="#fff"/><rect x="10" y="8" width="2" height="2" fill="#b8b8b8"/><rect x="12" y="8" width="2" height="2" fill="#fff"/><rect x="14" y="8" width="2" height="2" fill="#b8b8b8"/><rect x="16" y="8" width="2" height="2" fill="#fff"/><rect x="6" y="10" width="2" height="2" fill="#fff"/><rect x="8" y="10" width="2" height="2" fill="#b8b8b8"/><rect x="10" y="10" width="2" height="2" fill="#fff"/><rect x="12" y="10" width="2" height="2" fill="#b8b8b8"/><rect x="14" y="10" width="2" height="2" fill="#fff"/><rect x="16" y="10" width="2" height="2" fill="#b8b8b8"/><rect x="6" y="12" width="2" height="2" fill="#b8b8b8"/><rect x="8" y="12" width="2" height="2" fill="#fff"/><rect x="10" y="12" width="2" height="2" fill="#b8b8b8"/><rect x="12" y="12" width="2" height="2" fill="#fff"/><rect x="14" y="12" width="2" height="2" fill="#b8b8b8"/><rect x="16" y="12" width="2" height="2" fill="#fff"/><rect x="6" y="14" width="2" height="2" fill="#fff"/><rect x="8" y="14" width="2" height="2" fill="#b8b8b8"/><rect x="10" y="14" width="2" height="2" fill="#fff"/><rect x="12" y="14" width="2" height="2" fill="#b8b8b8"/><rect x="14" y="14" width="2" height="2" fill="#fff"/><rect x="16" y="14" width="2" height="2" fill="#b8b8b8"/><rect x="6" y="4" width="2" height="2" fill="#000"/><rect x="16" y="4" width="2" height="2" fill="#000"/><rect x="4" y="6" width="2" height="8" fill="#000"/><rect x="18" y="6" width="2" height="10" fill="#000"/><rect x="6" y="14" width="2" height="2" fill="#000"/><rect x="16" y="14" width="2" height="2" fill="#000"/><rect x="8" y="16" width="10" height="2" fill="#000"/><rect x="18" y="16" width="2" height="2" fill="#fff"/><rect x="20" y="16" width="2" height="2" fill="#000"/><rect x="18" y="18" width="2" height="2" fill="#000"/><rect x="20" y="18" width="2" height="2" fill="#fff"/><rect x="22" y="18" width="2" height="2" fill="#000"/><rect x="20" y="20" width="2" height="2" fill="#000"/><rect x="22" y="20" width="2" height="2" fill="#fff"/><rect x="24" y="20" width="2" height="2" fill="#000"/><rect x="22" y="22" width="2" height="2" fill="#000"/><rect x="24" y="22" width="2" height="2" fill="#fff"/><rect x="26" y="22" width="2" height="2" fill="#000"/><rect x="24" y="24" width="4" height="2" fill="#000"/><rect x="4" y="4" width="2" height="2" fill="#c0c0c0"/><rect x="18" y="4" width="2" height="2" fill="#c0c0c0"/><rect x="4" y="14" width="2" height="2" fill="#c0c0c0"/><rect x="30" y="8" width="14" height="2" fill="#000"/><rect x="36" y="4" width="2" height="12" fill="#000"/><rect x="4" y="26" width="40" height="4" fill="#ff00ff"/><rect x="8" y="22" width="2" height="4" fill="#ff00ff"/><rect x="6" y="24" width="2" height="2" fill="#ff00ff"/><rect x="6" y="30" width="4" height="2" fill="#ff00ff"/><rect x="38" y="22" width="2" height="4" fill="#ff00ff"/><rect x="40" y="24" width="2" height="2" fill="#ff00ff"/><rect x="38" y="30" width="4" height="2" fill="#ff00ff"/></svg><div class="r" style="left:878px;top:142px;width:48px;height:36px;background:#c0c0c0;box-shadow:inset -2px -2px #696969,inset 2px 2px #fff,inset -4px -4px #a0a0a0,inset 4px 4px #e3e3e3;"></div><svg class="r" style="left:878px;top:142px" width="48" height="36" viewBox="0 0 48 36"><rect x="6" y="4" width="2" height="2" fill="#b8b8b8"/><rect x="8" y="4" width="2" height="2" fill="#fff"/><rect x="10" y="4" width="2" height="2" fill="#b8b8b8"/><rect x="12" y="4" width="2" height="2" fill="#fff"/><rect x="14" y="4" width="2" height="2" fill="#b8b8b8"/><rect x="16" y="4" width="2" height="2" fill="#fff"/><rect x="6" y="6" width="2" height="2" fill="#fff"/><rect x="8" y="6" width="2" height="2" fill="#b8b8b8"/><rect x="10" y="6" width="2" height="2" fill="#fff"/><rect x="12" y="6" width="2" height="2" fill="#b8b8b8"/><rect x="14" y="6" width="2" height="2" fill="#fff"/><rect x="16" y="6" width="2" height="2" fill="#b8b8b8"/><rect x="6" y="8" width="2" height="2" fill="#b8b8b8"/><rect x="8" y="8" width="2" height="2" fill="#fff"/><rect x="10" y="8" width="2" height="2" fill="#b8b8b8"/><rect x="12" y="8" width="2" height="2" fill="#fff"/><rect x="14" y="8" width="2" height="2" fill="#b8b8b8"/><rect x="16" y="8" width="2" height="2" fill="#fff"/><rect x="6" y="10" width="2" height="2" fill="#fff"/><rect x="8" y="10" width="2" height="2" fill="#b8b8b8"/><rect x="10" y="10" width="2" height="2" fill="#fff"/><rect x="12" y="10" width="2" height="2" fill="#b8b8b8"/><rect x="14" y="10" width="2" height="2" fill="#fff"/><rect x="16" y="10" width="2" height="2" fill="#b8b8b8"/><rect x="6" y="12" width="2" height="2" fill="#b8b8b8"/><rect x="8" y="12" width="2" height="2" fill="#fff"/><rect x="10" y="12" width="2" height="2" fill="#b8b8b8"/><rect x="12" y="12" width="2" height="2" fill="#fff"/><rect x="14" y="12" width="2" height="2" fill="#b8b8b8"/><rect x="16" y="12" width="2" height="2" fill="#fff"/><rect x="6" y="14" width="2" height="2" fill="#fff"/><rect x="8" y="14" width="2" height="2" fill="#b8b8b8"/><rect x="10" y="14" width="2" height="2" fill="#fff"/><rect x="12" y="14" width="2" height="2" fill="#b8b8b8"/><rect x="14" y="14" width="2" height="2" fill="#fff"/><rect x="16" y="14" width="2" height="2" fill="#b8b8b8"/><rect x="6" y="4" width="2" height="2" fill="#000"/><rect x="16" y="4" width="2" height="2" fill="#000"/><rect x="4" y="6" width="2" height="8" fill="#000"/><rect x="18" y="6" width="2" height="10" fill="#000"/><rect x="6" y="14" width="2" height="2" fill="#000"/><rect x="16" y="14" width="2" height="2" fill="#000"/><rect x="8" y="16" width="10" height="2" fill="#000"/><rect x="18" y="16" width="2" height="2" fill="#fff"/><rect x="20" y="16" width="2" height="2" fill="#000"/><rect x="18" y="18" width="2" height="2" fill="#000"/><rect x="20" y="18" width="2" height="2" fill="#fff"/><rect x="22" y="18" width="2" height="2" fill="#000"/><rect x="20" y="20" width="2" height="2" fill="#000"/><rect x="22" y="20" width="2" height="2" fill="#fff"/><rect x="24" y="20" width="2" height="2" fill="#000"/><rect x="22" y="22" width="2" height="2" fill="#000"/><rect x="24" y="22" width="2" height="2" fill="#fff"/><rect x="26" y="22" width="2" height="2" fill="#000"/><rect x="24" y="24" width="4" height="2" fill="#000"/><rect x="4" y="4" width="2" height="2" fill="#c0c0c0"/><rect x="18" y="4" width="2" height="2" fill="#c0c0c0"/><rect x="4" y="14" width="2" height="2" fill="#c0c0c0"/><rect x="4" y="26" width="14" height="2" fill="#000"/><rect x="10" y="20" width="2" height="12" fill="#000"/><rect x="36" y="4" width="4" height="28" fill="#ff00ff"/><rect x="34" y="4" width="8" height="2" fill="#ff00ff"/><rect x="32" y="6" width="12" height="2" fill="#ff00ff"/><rect x="32" y="28" width="12" height="2" fill="#ff00ff"/><rect x="34" y="30" width="8" height="2" fill="#ff00ff"/></svg><div class="r" style="left:926px;top:142px;width:48px;height:36px;background:#c0c0c0;box-shadow:inset -2px -2px #696969,inset 2px 2px #fff,inset -4px -4px #a0a0a0,inset 4px 4px #e3e3e3;"></div><svg class="r" style="left:926px;top:142px" width="48" height="36" viewBox="0 0 48 36"><rect x="6" y="4" width="2" height="2" fill="#b8b8b8"/><rect x="8" y="4" width="2" height="2" fill="#fff"/><rect x="10" y="4" width="2" height="2" fill="#b8b8b8"/><rect x="12" y="4" width="2" height="2" fill="#fff"/><rect x="14" y="4" width="2" height="2" fill="#b8b8b8"/><rect x="16" y="4" width="2" height="2" fill="#fff"/><rect x="6" y="6" width="2" height="2" fill="#fff"/><rect x="8" y="6" width="2" height="2" fill="#b8b8b8"/><rect x="10" y="6" width="2" height="2" fill="#fff"/><rect x="12" y="6" width="2" height="2" fill="#b8b8b8"/><rect x="14" y="6" width="2" height="2" fill="#fff"/><rect x="16" y="6" width="2" height="2" fill="#b8b8b8"/><rect x="6" y="8" width="2" height="2" fill="#b8b8b8"/><rect x="8" y="8" width="2" height="2" fill="#fff"/><rect x="10" y="8" width="2" height="2" fill="#b8b8b8"/><rect x="12" y="8" width="2" height="2" fill="#fff"/><rect x="14" y="8" width="2" height="2" fill="#b8b8b8"/><rect x="16" y="8" width="2" height="2" fill="#fff"/><rect x="6" y="10" width="2" height="2" fill="#fff"/><rect x="8" y="10" width="2" height="2" fill="#b8b8b8"/><rect x="10" y="10" width="2" height="2" fill="#fff"/><rect x="12" y="10" width="2" height="2" fill="#b8b8b8"/><rect x="14" y="10" width="2" height="2" fill="#fff"/><rect x="16" y="10" width="2" height="2" fill="#b8b8b8"/><rect x="6" y="12" width="2" height="2" fill="#b8b8b8"/><rect x="8" y="12" width="2" height="2" fill="#fff"/><rect x="10" y="12" width="2" height="2" fill="#b8b8b8"/><rect x="12" y="12" width="2" height="2" fill="#fff"/><rect x="14" y="12" width="2" height="2" fill="#b8b8b8"/><rect x="16" y="12" width="2" height="2" fill="#fff"/><rect x="6" y="14" width="2" height="2" fill="#fff"/><rect x="8" y="14" width="2" height="2" fill="#b8b8b8"/><rect x="10" y="14" width="2" height="2" fill="#fff"/><rect x="12" y="14" width="2" height="2" fill="#b8b8b8"/><rect x="14" y="14" width="2" height="2" fill="#fff"/><rect x="16" y="14" width="2" height="2" fill="#b8b8b8"/><rect x="6" y="4" width="2" height="2" fill="#000"/><rect x="16" y="4" width="2" height="2" fill="#000"/><rect x="4" y="6" width="2" height="8" fill="#000"/><rect x="18" y="6" width="2" height="10" fill="#000"/><rect x="6" y="14" width="2" height="2" fill="#000"/><rect x="16" y="14" width="2" height="2" fill="#000"/><rect x="8" y="16" width="10" height="2" fill="#000"/><rect x="18" y="16" width="2" height="2" fill="#fff"/><rect x="20" y="16" width="2" height="2" fill="#000"/><rect x="18" y="18" width="2" height="2" fill="#000"/><rect x="20" y="18" width="2" height="2" fill="#fff"/><rect x="22" y="18" width="2" height="2" fill="#000"/><rect x="20" y="20" width="2" height="2" fill="#000"/><rect x="22" y="20" width="2" height="2" fill="#fff"/><rect x="24" y="20" width="2" height="2" fill="#000"/><rect x="22" y="22" width="2" height="2" fill="#000"/><rect x="24" y="22" width="2" height="2" fill="#fff"/><rect x="26" y="22" width="2" height="2" fill="#000"/><rect x="24" y="24" width="4" height="2" fill="#000"/><rect x="4" y="4" width="2" height="2" fill="#c0c0c0"/><rect x="18" y="4" width="2" height="2" fill="#c0c0c0"/><rect x="4" y="14" width="2" height="2" fill="#c0c0c0"/><rect x="4" y="26" width="14" height="2" fill="#000"/><rect x="36" y="4" width="4" height="28" fill="#ff00ff"/><rect x="34" y="4" width="8" height="2" fill="#ff00ff"/><rect x="32" y="6" width="12" height="2" fill="#ff00ff"/><rect x="32" y="28" width="12" height="2" fill="#ff00ff"/><rect x="34" y="30" width="8" height="2" fill="#ff00ff"/></svg><div class="r" style="left:1006px;top:142px;width:48px;height:36px;background:#a0a0a0;box-shadow:inset -2px -2px #696969,inset 2px 2px #fff,inset -4px -4px #a0a0a0,inset 4px 4px #e3e3e3;"></div><svg class="r" style="left:1006px;top:142px" width="48" height="36" viewBox="0 0 48 36"><rect x="8" y="4" width="2" height="2" fill="#fff"/><rect x="10" y="4" width="2" height="2" fill="#808080"/><rect x="12" y="4" width="2" height="2" fill="#fff"/><rect x="14" y="4" width="2" height="2" fill="#808080"/><rect x="6" y="6" width="2" height="2" fill="#fff"/><rect x="8" y="6" width="2" height="2" fill="#808080"/><rect x="10" y="6" width="2" height="2" fill="#fff"/><rect x="12" y="6" width="2" height="2" fill="#808080"/><rect x="14" y="6" width="2" height="2" fill="#fff"/><rect x="16" y="6" width="2" height="2" fill="#808080"/><rect x="6" y="8" width="2" height="2" fill="#808080"/><rect x="8" y="8" width="2" height="2" fill="#fff"/><rect x="10" y="8" width="2" height="2" fill="#808080"/><rect x="12" y="8" width="2" height="2" fill="#fff"/><rect x="14" y="8" width="2" height="2" fill="#808080"/><rect x="16" y="8" width="2" height="2" fill="#fff"/><rect x="6" y="10" width="2" height="2" fill="#fff"/><rect x="8" y="10" width="2" height="2" fill="#808080"/><rect x="10" y="10" width="2" height="2" fill="#fff"/><rect x="12" y="10" width="2" height="2" fill="#808080"/><rect x="14" y="10" width="2" height="2" fill="#fff"/><rect x="16" y="10" width="2" height="2" fill="#808080"/><rect x="6" y="12" width="2" height="2" fill="#808080"/><rect x="8" y="12" width="2" height="2" fill="#fff"/><rect x="10" y="12" width="2" height="2" fill="#808080"/><rect x="12" y="12" width="2" height="2" fill="#fff"/><rect x="14" y="12" width="2" height="2" fill="#808080"/><rect x="16" y="12" width="2" height="2" fill="#fff"/><rect x="8" y="14" width="2" height="2" fill="#808080"/><rect x="10" y="14" width="2" height="2" fill="#fff"/><rect x="12" y="14" width="2" height="2" fill="#808080"/><rect x="14" y="14" width="2" height="2" fill="#fff"/><rect x="18" y="16" width="2" height="2" fill="#fff"/><rect x="20" y="18" width="2" height="2" fill="#fff"/><rect x="22" y="20" width="2" height="2" fill="#fff"/><rect x="24" y="22" width="2" height="2" fill="#fff"/></svg><div class="r" style="left:1054px;top:142px;width:48px;height:36px;background:#a0a0a0;box-shadow:inset -2px -2px #696969,inset 2px 2px #fff,inset -4px -4px #a0a0a0,inset 4px 4px #e3e3e3;"></div><svg class="r" style="left:1054px;top:142px" width="48" height="36" viewBox="0 0 48 36"><rect x="8" y="4" width="2" height="2" fill="#fff"/><rect x="10" y="4" width="2" height="2" fill="#808080"/><rect x="12" y="4" width="2" height="2" fill="#fff"/><rect x="14" y="4" width="2" height="2" fill="#808080"/><rect x="6" y="6" width="2" height="2" fill="#fff"/><rect x="8" y="6" width="2" height="2" fill="#808080"/><rect x="10" y="6" width="2" height="2" fill="#fff"/><rect x="12" y="6" width="2" height="2" fill="#808080"/><rect x="14" y="6" width="2" height="2" fill="#fff"/><rect x="16" y="6" width="2" height="2" fill="#808080"/><rect x="6" y="8" width="2" height="2" fill="#808080"/><rect x="8" y="8" width="2" height="2" fill="#fff"/><rect x="10" y="8" width="2" height="2" fill="#808080"/><rect x="12" y="8" width="2" height="2" fill="#fff"/><rect x="14" y="8" width="2" height="2" fill="#808080"/><rect x="16" y="8" width="2" height="2" fill="#fff"/><rect x="6" y="10" width="2" height="2" fill="#fff"/><rect x="8" y="10" width="2" height="2" fill="#808080"/><rect x="10" y="10" width="2" height="2" fill="#fff"/><rect x="12" y="10" width="2" height="2" fill="#808080"/><rect x="14" y="10" width="2" height="2" fill="#fff"/><rect x="16" y="10" width="2" height="2" fill="#808080"/><rect x="6" y="12" width="2" height="2" fill="#808080"/><rect x="8" y="12" width="2" height="2" fill="#fff"/><rect x="10" y="12" width="2" height="2" fill="#808080"/><rect x="12" y="12" width="2" height="2" fill="#fff"/><rect x="14" y="12" width="2" height="2" fill="#808080"/><rect x="16" y="12" width="2" height="2" fill="#fff"/><rect x="8" y="14" width="2" height="2" fill="#808080"/><rect x="10" y="14" width="2" height="2" fill="#fff"/><rect x="12" y="14" width="2" height="2" fill="#808080"/><rect x="14" y="14" width="2" height="2" fill="#fff"/><rect x="18" y="16" width="2" height="2" fill="#fff"/><rect x="20" y="18" width="2" height="2" fill="#fff"/><rect x="22" y="20" width="2" height="2" fill="#fff"/><rect x="24" y="22" width="2" height="2" fill="#fff"/></svg><div class="r" style="left:1136px;top:144px;width:26px;height:26px;background:#f0f0f0;box-shadow:inset 2px 2px #a0a0a0,inset -2px -2px #fff,inset 4px 4px #696969,inset -4px -4px #e3e3e3"></div><div class="r" style="left:1170px;top:140px;width:165px;height:38px;overflow:hidden"><div class="t" style="left:2.00px;top:8.67px;font-size:20px;color:#888;font-family:'Liberation Mono', monospace;transform:scale(1.0237,1.2140);transform-origin:0 15.33px;text-shadow:2px 2px 0 #fff;">Keep on screen</div></div><div class="r" style="left:756px;top:182px;width:6px;height:428px;background:#f0f0f0;"></div><div class="r" style="left:0px;top:182px;width:756px;height:422px;background:#fff;box-shadow:inset 2px 2px #a0a0a0,inset -2px -2px #fff,inset 4px 4px #696969,inset -4px -4px #f0f0f0"></div><div class="r" style="left:762px;top:182px;width:2118px;height:422px;background:#fff;box-shadow:inset 2px 2px #a0a0a0,inset -2px -2px #fff,inset 4px 4px #696969,inset -4px -4px #f0f0f0"></div><svg class="r" style="left:0;top:0" width="2880" height="610" viewBox="0 0 2880 610" shape-rendering="crispEdges"><path d="M80 349 H708" stroke="#000" stroke-width="2" stroke-dasharray="2 10"/><path d="M80 395 H708" stroke="#000" stroke-width="2" stroke-dasharray="2 10"/><path d="M80 441 H708" stroke="#000" stroke-width="2" stroke-dasharray="2 10"/><path d="M229 314 V486" stroke="#000" stroke-width="2" stroke-dasharray="2 10"/><path d="M389 314 V486" stroke="#000" stroke-width="2" stroke-dasharray="2 10"/><path d="M549 314 V486" stroke="#000" stroke-width="2" stroke-dasharray="2 10"/><path d="M69 303 H709 V487 H69 Z" fill="none" stroke="#000" stroke-width="2"/><rect x="64" y="302" width="8" height="2"/><rect x="64" y="348" width="8" height="2"/><rect x="64" y="394" width="8" height="2"/><rect x="64" y="440" width="8" height="2"/><rect x="64" y="486" width="8" height="2"/><rect x="68" y="298" width="2" height="10"/><rect x="68" y="482" width="2" height="10"/><rect x="228" y="298" width="2" height="10"/><rect x="228" y="482" width="2" height="10"/><rect x="388" y="298" width="2" height="10"/><rect x="388" y="482" width="2" height="10"/><rect x="548" y="298" width="2" height="10"/><rect x="548" y="482" width="2" height="10"/><rect x="708" y="298" width="2" height="10"/><rect x="708" y="482" width="2" height="10"/><path d="M226 307 H244M210 309 H228M228 311 H246M220 313 H246M246 315 H278M266 317 H282M282 319 H298M246 321 H280M228 323 H246M246 325 H262M250 327 H262M220 329 H250M200 331 H220M206 333 H222M222 335 H252M252 337 H270M228 339 H304M304 341 H378M290 343 H332" stroke="#f00" stroke-width="2" fill="none"/><path d="M432 307 H438M438 309 H448M448 311 H460M455 313 H466M442 315 H456M456 317 H464M462 319 H472M472 321 H480M464 323 H474M456 325 H482M432 327 H452M452 329 H472M454 331 H468M466 333 H490M466 335 H502M422 337 H466M370 339 H448M448 341 H524M442 343 H482" stroke="#00c800" stroke-width="2" fill="none"/><path d="M280 577 H364" stroke="#f00" stroke-width="2"/><path d="M546 577 H630" stroke="#00c800" stroke-width="2"/><path d="M842 349 H2836" stroke="#000" stroke-width="2" stroke-dasharray="2 10"/><path d="M842 395 H2836" stroke="#000" stroke-width="2" stroke-dasharray="2 10"/><path d="M842 441 H2836" stroke="#000" stroke-width="2" stroke-dasharray="2 10"/><path d="M1333 314 V486" stroke="#000" stroke-width="2" stroke-dasharray="2 10"/><path d="M1835 314 V486" stroke="#000" stroke-width="2" stroke-dasharray="2 10"/><path d="M2335 314 V486" stroke="#000" stroke-width="2" stroke-dasharray="2 10"/><path d="M831 303 H2837 V487 H831 Z" fill="none" stroke="#000" stroke-width="2"/><rect x="826" y="302" width="8" height="2"/><rect x="826" y="348" width="8" height="2"/><rect x="826" y="394" width="8" height="2"/><rect x="826" y="440" width="8" height="2"/><rect x="826" y="486" width="8" height="2"/><rect x="830" y="298" width="2" height="10"/><rect x="830" y="482" width="2" height="10"/><rect x="1332" y="298" width="2" height="10"/><rect x="1332" y="482" width="2" height="10"/><rect x="1834" y="298" width="2" height="10"/><rect x="1834" y="482" width="2" height="10"/><rect x="2334" y="298" width="2" height="10"/><rect x="2334" y="482" width="2" height="10"/><rect x="2836" y="298" width="2" height="10"/><rect x="2836" y="482" width="2" height="10"/><path d="M892 343 H960M960 341 H1060M1060 339 H1451M1451 337 H2055M2055 335 H2355M2166 333 H2295M1754 331 H2166M1412 329 H1754M1784 327 H2156M1752 325 H2085M2085 323 H2486M2486 321 H2558M2526 319 H2558M2397 317 H2526M2294 315 H2397M2526 315 H2586M2586 313 H2758M2758 311 H2786M2786 309 H2818M2756 307 H2786" stroke="#0000f0" stroke-width="2" fill="none"/><path d="M1036 349 H1056M1056 347 H1094M1094 345 H1168M1168 343 H1226M1226 341 H1248M1338 337 H1418M1418 335 H1470M1463 333 H1486M1406 331 H1462M1372 329 H1412M1420 327 H1469M1469 325 H1512M1512 323 H1591M1591 321 H1649M1649 319 H1684M1688 317 H1709M1657 315 H1684M1657 313 H1684M1684 311 H1733M1733 309 H1760M1760 307 H1764" stroke="#00c800" stroke-width="2" fill="none"/><path d="M1418 349 H1426M1428 345 H1438M1438 343 H1450M1450 341 H1460M1460 339 H1478M1506 335 H1536M1536 333 H1552M1518 331 H1538M1526 327 H1547M1547 325 H1568M1590 323 H1624M1648 321 H1676M1688 319 H1703M1701 317 H1724M1701 315 H1724M1648 315 H1658M1630 313 H1648M1640 311 H1680M1680 309 H1733M1760 309 H1808M1808 307 H1910" stroke="#f00" stroke-width="2" fill="none"/><path d="M1022 351 H1036M1000 353 H1022M970 355 H1000M950 357 H970M938 359 H950M934 361 H940M938 363 H942M938 365 H942M934 367 H938M938 369 H942M936 371 H938M936 373 H942M938 375 H946M930 377 H938M936 379 H940M932 381 H938M938 383 H944M932 385 H938M932 393 H936M926 395 H932M924 397 H926" stroke="#00c800" stroke-width="2" fill="none"/><path d="M935 386 V393" stroke="#00c800" stroke-width="2"/><path d="M1426 347 H1430M1414 351 H1418M1412 353 H1416M1408 355 H1412M1406 357 H1410M1410 359 H1414M1404 361 H1410M1402 363 H1404M1404 365 H1408M1406 367 H1410M1404 369 H1408M1408 371 H1410M1404 373 H1410M1400 375 H1404M1402 377 H1404M1404 379 H1406M1402 381 H1404M1400 383 H1404M1404 385 H1410M1402 387 H1406M1404 389 H1410M1408 391 H1414M1400 393 H1408M1394 395 H1402M1402 397 H1406" stroke="#f00" stroke-width="2" fill="none"/><path d="M2140 577 H2223" stroke="#f00" stroke-width="2"/><path d="M2354 577 H2437" stroke="#00c800" stroke-width="2"/><path d="M2626 577 H2710" stroke="#0000f0" stroke-width="2"/></svg><div class="t" style="left:27.40px;top:197.14px;font-size:27px;transform:scale(0.9510,1.0444);transform-origin:0 22.86px;">Short Average Velocity - Ens 294,    12 Nov 2024 13:28:03.00</div><div class="t" style="left:164.00px;top:222.22px;font-size:21px;transform:scale(1.0352,1.0000);transform-origin:0 17.78px;">Velocity (m/s),  Direction (deg)   Ref: Delta pos</div><div class="t" style="left:48.56px;top:270.22px;font-size:21px;transform:scale(1.0000,1.0520);transform-origin:0 17.78px;">0.00</div><div class="t" style="left:208.56px;top:270.22px;font-size:21px;transform:scale(1.0000,1.0520);transform-origin:0 17.78px;">0.25</div><div class="t" style="left:368.56px;top:270.22px;font-size:21px;transform:scale(1.0000,1.0520);transform-origin:0 17.78px;">0.50</div><div class="t" style="left:528.56px;top:270.22px;font-size:21px;transform:scale(1.0000,1.0520);transform-origin:0 17.78px;">0.75</div><div class="t" style="left:688.56px;top:270.22px;font-size:21px;transform:scale(1.0000,1.0520);transform-origin:0 17.78px;">1.00</div><div class="t" style="left:63.16px;top:506.22px;font-size:21px;transform:scale(1.0000,1.0520);transform-origin:0 17.78px;">0</div><div class="t" style="left:217.32px;top:506.22px;font-size:21px;transform:scale(1.0000,1.0520);transform-origin:0 17.78px;">90</div><div class="t" style="left:371.48px;top:506.22px;font-size:21px;transform:scale(1.0000,1.0520);transform-origin:0 17.78px;">180</div><div class="t" style="left:531.48px;top:506.22px;font-size:21px;transform:scale(1.0000,1.0520);transform-origin:0 17.78px;">270</div><div class="t" style="left:691.48px;top:506.22px;font-size:21px;transform:scale(1.0000,1.0520);transform-origin:0 17.78px;">360</div><div class="t" style="left:47.32px;top:293.22px;font-size:21px;transform:scale(1.0000,1.0520);transform-origin:0 17.78px;">0</div><div class="t" style="left:35.64px;top:339.22px;font-size:21px;transform:scale(1.0000,1.0520);transform-origin:0 17.78px;">50</div><div class="t" style="left:23.96px;top:385.22px;font-size:21px;transform:scale(1.0000,1.0520);transform-origin:0 17.78px;">100</div><div class="t" style="left:23.96px;top:431.22px;font-size:21px;transform:scale(1.0000,1.0520);transform-origin:0 17.78px;">150</div><div class="t" style="left:23.96px;top:477.22px;font-size:21px;transform:scale(1.0000,1.0520);transform-origin:0 17.78px;">200</div><div class="t" style="left:32.00px;top:546.22px;font-size:21px;transform:scale(1.0069,1.0936);transform-origin:0 17.78px;">Depth (m)</div><div class="t" style="left:393.00px;top:568.22px;font-size:21px;transform:scale(0.9891,1.0936);transform-origin:0 17.78px;">Magnitude</div><div class="t" style="left:659.00px;top:568.22px;font-size:21px;transform:scale(0.9896,1.0936);transform-origin:0 17.78px;">Direction</div><div class="t" style="left:1445.00px;top:197.14px;font-size:27px;transform:scale(0.9488,1.0444);transform-origin:0 22.86px;">Short Average Data Quality - Ens 294,    12 Nov 2024 13:28:03.00</div><div class="t" style="left:1748.50px;top:222.22px;font-size:21px;transform:scale(1.0177,1.0728);transform-origin:0 17.78px;">Counts &amp; Percent</div><div class="t" style="left:825.16px;top:270.22px;font-size:21px;transform:scale(1.0000,1.0520);transform-origin:0 17.78px;">0</div><div class="t" style="left:1321.32px;top:270.22px;font-size:21px;transform:scale(1.0000,1.0520);transform-origin:0 17.78px;">64</div><div class="t" style="left:1817.48px;top:270.22px;font-size:21px;transform:scale(1.0000,1.0520);transform-origin:0 17.78px;">128</div><div class="t" style="left:2317.48px;top:270.22px;font-size:21px;transform:scale(1.0000,1.0520);transform-origin:0 17.78px;">192</div><div class="t" style="left:2819.48px;top:270.22px;font-size:21px;transform:scale(1.0000,1.0520);transform-origin:0 17.78px;">256</div><div class="t" style="left:825.16px;top:506.22px;font-size:21px;transform:scale(1.0000,1.0520);transform-origin:0 17.78px;">0</div><div class="t" style="left:1321.32px;top:506.22px;font-size:21px;transform:scale(1.0000,1.0520);transform-origin:0 17.78px;">25</div><div class="t" style="left:1823.32px;top:506.22px;font-size:21px;transform:scale(1.0000,1.0520);transform-origin:0 17.78px;">50</div><div class="t" style="left:2323.32px;top:506.22px;font-size:21px;transform:scale(1.0000,1.0520);transform-origin:0 17.78px;">75</div><div class="t" style="left:2819.48px;top:506.22px;font-size:21px;transform:scale(1.0000,1.0520);transform-origin:0 17.78px;">100</div><div class="t" style="left:809.32px;top:293.22px;font-size:21px;transform:scale(1.0000,1.0520);transform-origin:0 17.78px;">0</div><div class="t" style="left:797.64px;top:339.22px;font-size:21px;transform:scale(1.0000,1.0520);transform-origin:0 17.78px;">50</div><div class="t" style="left:785.96px;top:385.22px;font-size:21px;transform:scale(1.0000,1.0520);transform-origin:0 17.78px;">100</div><div class="t" style="left:785.96px;top:431.22px;font-size:21px;transform:scale(1.0000,1.0520);transform-origin:0 17.78px;">150</div><div class="t" style="left:785.96px;top:477.22px;font-size:21px;transform:scale(1.0000,1.0520);transform-origin:0 17.78px;">200</div><div class="t" style="left:795.00px;top:546.22px;font-size:21px;transform:scale(0.9855,1.0936);transform-origin:0 17.78px;">Depth (m)</div><div class="t" style="left:2252.00px;top:568.22px;font-size:21px;transform:scale(0.9589,1.0936);transform-origin:0 17.78px;">RSSI</div><div class="t" style="left:2466.50px;top:568.22px;font-size:21px;transform:scale(0.9930,1.0936);transform-origin:0 17.78px;">Correlation</div><div class="t" style="left:2738.70px;top:568.22px;font-size:21px;transform:scale(1.0086,1.0936);transform-origin:0 17.78px;">Percent good</div><div class="r" style="left:0px;top:604px;width:2880px;height:6px;background:#f0f0f0;"></div><div class="r" style="left:0;top:610px;width:2880px;height:1072px;background:#fff;box-shadow:inset 2px 2px #a0a0a0,inset -2px -2px #fff,inset 4px 4px #696969,inset -4px -4px #f0f0f0"></div><div class="r" style="left:4px;top:614px;width:90px;height:42px;background:#f0f0f0;box-shadow:inset -2px -2px #696969,inset 2px 2px #fff,inset -4px -4px #a0a0a0,inset 4px 4px #e3e3e3"></div><div class="r" style="left:94px;top:614px;width:128px;height:42px;background:#f0f0f0;box-shadow:inset -2px -2px #696969,inset 2px 2px #fff,inset -4px -4px #a0a0a0,inset 4px 4px #e3e3e3"></div><div class="r" style="left:222px;top:614px;width:150px;height:42px;background:#f0f0f0;box-shadow:inset -2px -2px #696969,inset 2px 2px #fff,inset -4px -4px #a0a0a0,inset 4px 4px #e3e3e3"></div><div class="r" style="left:372px;top:614px;width:150px;height:42px;background:#f0f0f0;box-shadow:inset -2px -2px #696969,inset 2px 2px #fff,inset -4px -4px #a0a0a0,inset 4px 4px #e3e3e3"></div><div class="r" style="left:522px;top:614px;width:150px;height:42px;background:#f0f0f0;box-shadow:inset -2px -2px #696969,inset 2px 2px #fff,inset -4px -4px #a0a0a0,inset 4px 4px #e3e3e3"></div><div class="r" style="left:672px;top:614px;width:150px;height:42px;background:#f0f0f0;box-shadow:inset -2px -2px #696969,inset 2px 2px #fff,inset -4px -4px #a0a0a0,inset 4px 4px #e3e3e3"></div><div class="r" style="left:822px;top:614px;width:124px;height:42px;background:#f0f0f0;box-shadow:inset -2px -2px #696969,inset 2px 2px #fff,inset -4px -4px #a0a0a0,inset 4px 4px #e3e3e3"></div><div class="r" style="left:946px;top:614px;width:124px;height:42px;background:#f0f0f0;box-shadow:inset -2px -2px #696969,inset 2px 2px #fff,inset -4px -4px #a0a0a0,inset 4px 4px #e3e3e3"></div><div class="r" style="left:1070px;top:614px;width:124px;height:42px;background:#f0f0f0;box-shadow:inset -2px -2px #696969,inset 2px 2px #fff,inset -4px -4px #a0a0a0,inset 4px 4px #e3e3e3"></div><div class="r" style="left:1194px;top:614px;width:124px;height:42px;background:#f0f0f0;box-shadow:inset -2px -2px #696969,inset 2px 2px #fff,inset -4px -4px #a0a0a0,inset 4px 4px #e3e3e3"></div><div class="r" style="left:1318px;top:614px;width:116px;height:42px;background:#f0f0f0;box-shadow:inset -2px -2px #696969,inset 2px 2px #fff,inset -4px -4px #a0a0a0,inset 4px 4px #e3e3e3"></div><div class="r" style="left:1434px;top:614px;width:116px;height:42px;background:#f0f0f0;box-shadow:inset -2px -2px #696969,inset 2px 2px #fff,inset -4px -4px #a0a0a0,inset 4px 4px #e3e3e3"></div><div class="r" style="left:1550px;top:614px;width:116px;height:42px;background:#f0f0f0;box-shadow:inset -2px -2px #696969,inset 2px 2px #fff,inset -4px -4px #a0a0a0,inset 4px 4px #e3e3e3"></div><div class="r" style="left:1666px;top:614px;width:116px;height:42px;background:#f0f0f0;box-shadow:inset -2px -2px #696969,inset 2px 2px #fff,inset -4px -4px #a0a0a0,inset 4px 4px #e3e3e3"></div><div class="r" style="left:1782px;top:614px;width:158px;height:42px;background:#f0f0f0;box-shadow:inset -2px -2px #696969,inset 2px 2px #fff,inset -4px -4px #a0a0a0,inset 4px 4px #e3e3e3"></div><div class="r" style="left:1940px;top:614px;width:158px;height:42px;background:#f0f0f0;box-shadow:inset -2px -2px #696969,inset 2px 2px #fff,inset -4px -4px #a0a0a0,inset 4px 4px #e3e3e3"></div><div class="r" style="left:2098px;top:614px;width:158px;height:42px;background:#f0f0f0;box-shadow:inset -2px -2px #696969,inset 2px 2px #fff,inset -4px -4px #a0a0a0,inset 4px 4px #e3e3e3"></div><div class="r" style="left:2256px;top:614px;width:158px;height:42px;background:#f0f0f0;box-shadow:inset -2px -2px #696969,inset 2px 2px #fff,inset -4px -4px #a0a0a0,inset 4px 4px #e3e3e3"></div><div class="r" style="left:2414px;top:614px;width:90px;height:42px;background:#f0f0f0;box-shadow:inset -2px -2px #696969,inset 2px 2px #fff,inset -4px -4px #a0a0a0,inset 4px 4px #e3e3e3"></div><div class="r" style="left:2504px;top:614px;width:338px;height:42px;background:#f0f0f0;box-shadow:inset -2px -2px #696969,inset 2px 2px #fff,inset -4px -4px #a0a0a0,inset 4px 4px #e3e3e3"></div><div class="t" style="left:17.50px;top:622.84px;font-size:25px;">BB ...</div><div class="t" style="left:107.50px;top:622.84px;font-size:25px;">Depth (...</div><div class="t" style="left:235.50px;top:622.84px;font-size:25px;">East (m/s)</div><div class="t" style="left:385.50px;top:622.84px;font-size:25px;">North (m...</div><div class="t" style="left:535.50px;top:622.84px;font-size:25px;">Up (m/s)</div><div class="t" style="left:685.50px;top:622.84px;font-size:25px;">Err (m/s)</div><div class="t" style="left:835.50px;top:622.84px;font-size:25px;">RSSI1 (...</div><div class="t" style="left:959.50px;top:622.84px;font-size:25px;">RSSI2 (...</div><div class="t" style="left:1083.50px;top:622.84px;font-size:25px;">RSSI3 (...</div><div class="t" style="left:1207.50px;top:622.84px;font-size:25px;">RSSI4 (...</div><div class="t" style="left:1331.50px;top:622.84px;font-size:25px;">Cor1 (...</div><div class="t" style="left:1447.50px;top:622.84px;font-size:25px;">Cor2 (...</div><div class="t" style="left:1563.50px;top:622.84px;font-size:25px;">Cor3 (...</div><div class="t" style="left:1679.50px;top:622.84px;font-size:25px;">Cor4 (...</div><div class="t" style="left:1795.50px;top:622.84px;font-size:25px;">3 bm goo...</div><div class="t" style="left:1953.50px;top:622.84px;font-size:25px;">Hi Verr (%)</div><div class="t" style="left:2111.50px;top:622.84px;font-size:25px;">2+ bm ba...</div><div class="t" style="left:2269.50px;top:622.84px;font-size:25px;">4 bm goo...</div><div class="t" style="left:2427.50px;top:622.84px;font-size:25px;">BB ...</div><svg class="r" style="left:0;top:656px" width="2842" height="1022" shape-rendering="crispEdges"><path d="M5 3 H2842 M5 39 H2842 M5 75 H2842 M5 111 H2842 M5 147 H2842 M5 183 H2842 M5 219 H2842 M5 255 H2842 M5 291 H2842 M5 327 H2842 M5 363 H2842 M5 399 H2842 M5 435 H2842 M5 471 H2842 M5 507 H2842 M5 543 H2842 M5 579 H2842 M5 615 H2842 M5 651 H2842 M5 687 H2842 M5 723 H2842 M5 759 H2842 M5 795 H2842 M5 831 H2842 M5 867 H2842 M5 903 H2842 M5 939 H2842 M5 975 H2842 M5 1011 H2842 " stroke="#f0f0f0" stroke-width="2"/><path d="M95 0 V1022 M223 0 V1022 M373 0 V1022 M523 0 V1022 M673 0 V1022 M823 0 V1022 M947 0 V1022 M1071 0 V1022 M1195 0 V1022 M1319 0 V1022 M1435 0 V1022 M1551 0 V1022 M1667 0 V1022 M1783 0 V1022 M1941 0 V1022 M2099 0 V1022 M2257 0 V1022 M2415 0 V1022 M2505 0 V1022 " stroke="#f0f0f0" stroke-width="2"/></svg><div class="r" style="left:0;top:656px;width:2842px;height:1022px;overflow:hidden"><div class="t" style="left:11.00px;top:8.84px;font-size:25px;">1</div><div class="t" style="left:107.50px;top:8.84px;font-size:25px;">4.11</div><div class="t" style="left:235.50px;top:8.84px;font-size:25px;">-0.112</div><div class="t" style="left:385.50px;top:8.84px;font-size:25px;">-0.249</div><div class="t" style="left:535.50px;top:8.84px;font-size:25px;">-0.130</div><div class="t" style="left:685.50px;top:8.84px;font-size:25px;">0.058</div><div class="t" style="left:835.50px;top:8.84px;font-size:25px;">140</div><div class="t" style="left:959.50px;top:8.84px;font-size:25px;">128</div><div class="t" style="left:1083.50px;top:8.84px;font-size:25px;">138</div><div class="t" style="left:1207.50px;top:8.84px;font-size:25px;">144</div><div class="t" style="left:1331.50px;top:8.84px;font-size:25px;">119</div><div class="t" style="left:1447.50px;top:8.84px;font-size:25px;">119</div><div class="t" style="left:1563.50px;top:8.84px;font-size:25px;">121</div><div class="t" style="left:1679.50px;top:8.84px;font-size:25px;">117</div><div class="t" style="left:1795.50px;top:8.84px;font-size:25px;">3</div><div class="t" style="left:1953.50px;top:8.84px;font-size:25px;">---</div><div class="t" style="left:2111.50px;top:8.84px;font-size:25px;">3</div><div class="t" style="left:2269.50px;top:8.84px;font-size:25px;">93</div><div class="t" style="left:2427.50px;top:8.84px;font-size:25px;">1</div><div class="t" style="left:11.00px;top:44.84px;font-size:25px;">2</div><div class="t" style="left:107.50px;top:44.84px;font-size:25px;">6.11</div><div class="t" style="left:235.50px;top:44.84px;font-size:25px;">-0.112</div><div class="t" style="left:385.50px;top:44.84px;font-size:25px;">-0.192</div><div class="t" style="left:535.50px;top:44.84px;font-size:25px;">-0.139</div><div class="t" style="left:685.50px;top:44.84px;font-size:25px;">0.014</div><div class="t" style="left:835.50px;top:44.84px;font-size:25px;">117</div><div class="t" style="left:959.50px;top:44.84px;font-size:25px;">99</div><div class="t" style="left:1083.50px;top:44.84px;font-size:25px;">114</div><div class="t" style="left:1207.50px;top:44.84px;font-size:25px;">118</div><div class="t" style="left:1331.50px;top:44.84px;font-size:25px;">123</div><div class="t" style="left:1447.50px;top:44.84px;font-size:25px;">108</div><div class="t" style="left:1563.50px;top:44.84px;font-size:25px;">122</div><div class="t" style="left:1679.50px;top:44.84px;font-size:25px;">120</div><div class="t" style="left:1795.50px;top:44.84px;font-size:25px;">6</div><div class="t" style="left:1953.50px;top:44.84px;font-size:25px;">---</div><div class="t" style="left:2111.50px;top:44.84px;font-size:25px;">---</div><div class="t" style="left:2269.50px;top:44.84px;font-size:25px;">93</div><div class="t" style="left:2427.50px;top:44.84px;font-size:25px;">2</div><div class="t" style="left:11.00px;top:80.84px;font-size:25px;">3</div><div class="t" style="left:107.50px;top:80.84px;font-size:25px;">8.11</div><div class="t" style="left:235.50px;top:80.84px;font-size:25px;">-0.163</div><div class="t" style="left:385.50px;top:80.84px;font-size:25px;">-0.223</div><div class="t" style="left:535.50px;top:80.84px;font-size:25px;">-0.147</div><div class="t" style="left:685.50px;top:80.84px;font-size:25px;">0.032</div><div class="t" style="left:835.50px;top:80.84px;font-size:25px;">110</div><div class="t" style="left:959.50px;top:80.84px;font-size:25px;">91</div><div class="t" style="left:1083.50px;top:80.84px;font-size:25px;">108</div><div class="t" style="left:1207.50px;top:80.84px;font-size:25px;">110</div><div class="t" style="left:1331.50px;top:80.84px;font-size:25px;">117</div><div class="t" style="left:1447.50px;top:80.84px;font-size:25px;">93</div><div class="t" style="left:1563.50px;top:80.84px;font-size:25px;">123</div><div class="t" style="left:1679.50px;top:80.84px;font-size:25px;">117</div><div class="t" style="left:1795.50px;top:80.84px;font-size:25px;">26</div><div class="t" style="left:1953.50px;top:80.84px;font-size:25px;">---</div><div class="t" style="left:2111.50px;top:80.84px;font-size:25px;">3</div><div class="t" style="left:2269.50px;top:80.84px;font-size:25px;">70</div><div class="t" style="left:2427.50px;top:80.84px;font-size:25px;">3</div><div class="t" style="left:11.00px;top:116.84px;font-size:25px;">4</div><div class="t" style="left:107.50px;top:116.84px;font-size:25px;">10.11</div><div class="t" style="left:235.50px;top:116.84px;font-size:25px;">-0.162</div><div class="t" style="left:385.50px;top:116.84px;font-size:25px;">-0.174</div><div class="t" style="left:535.50px;top:116.84px;font-size:25px;">-0.147</div><div class="t" style="left:685.50px;top:116.84px;font-size:25px;">0.024</div><div class="t" style="left:835.50px;top:116.84px;font-size:25px;">112</div><div class="t" style="left:959.50px;top:116.84px;font-size:25px;">89</div><div class="t" style="left:1083.50px;top:116.84px;font-size:25px;">103</div><div class="t" style="left:1207.50px;top:116.84px;font-size:25px;">104</div><div class="t" style="left:1331.50px;top:116.84px;font-size:25px;">115</div><div class="t" style="left:1447.50px;top:116.84px;font-size:25px;">85</div><div class="t" style="left:1563.50px;top:116.84px;font-size:25px;">116</div><div class="t" style="left:1679.50px;top:116.84px;font-size:25px;">106</div><div class="t" style="left:1795.50px;top:116.84px;font-size:25px;">26</div><div class="t" style="left:1953.50px;top:116.84px;font-size:25px;">---</div><div class="t" style="left:2111.50px;top:116.84px;font-size:25px;">3</div><div class="t" style="left:2269.50px;top:116.84px;font-size:25px;">70</div><div class="t" style="left:2427.50px;top:116.84px;font-size:25px;">4</div><div class="t" style="left:11.00px;top:152.84px;font-size:25px;">5</div><div class="t" style="left:107.50px;top:152.84px;font-size:25px;">12.11</div><div class="t" style="left:235.50px;top:152.84px;font-size:25px;">-0.158</div><div class="t" style="left:385.50px;top:152.84px;font-size:25px;">-0.269</div><div class="t" style="left:535.50px;top:152.84px;font-size:25px;">-0.168</div><div class="t" style="left:685.50px;top:152.84px;font-size:25px;">0.030</div><div class="t" style="left:835.50px;top:152.84px;font-size:25px;">117</div><div class="t" style="left:959.50px;top:152.84px;font-size:25px;">95</div><div class="t" style="left:1083.50px;top:152.84px;font-size:25px;">105</div><div class="t" style="left:1207.50px;top:152.84px;font-size:25px;">108</div><div class="t" style="left:1331.50px;top:152.84px;font-size:25px;">114</div><div class="t" style="left:1447.50px;top:152.84px;font-size:25px;">86</div><div class="t" style="left:1563.50px;top:152.84px;font-size:25px;">116</div><div class="t" style="left:1679.50px;top:152.84px;font-size:25px;">107</div><div class="t" style="left:1795.50px;top:152.84px;font-size:25px;">33</div><div class="t" style="left:1953.50px;top:152.84px;font-size:25px;">---</div><div class="t" style="left:2111.50px;top:152.84px;font-size:25px;">20</div><div class="t" style="left:2269.50px;top:152.84px;font-size:25px;">46</div><div class="t" style="left:2427.50px;top:152.84px;font-size:25px;">5</div><div class="t" style="left:11.00px;top:188.84px;font-size:25px;">6</div><div class="t" style="left:107.50px;top:188.84px;font-size:25px;">14.11</div><div class="t" style="left:235.50px;top:188.84px;font-size:25px;">-0.175</div><div class="t" style="left:385.50px;top:188.84px;font-size:25px;">-0.275</div><div class="t" style="left:535.50px;top:188.84px;font-size:25px;">-0.194</div><div class="t" style="left:685.50px;top:188.84px;font-size:25px;">-0.009</div><div class="t" style="left:835.50px;top:188.84px;font-size:25px;">118</div><div class="t" style="left:959.50px;top:188.84px;font-size:25px;">100</div><div class="t" style="left:1083.50px;top:188.84px;font-size:25px;">120</div><div class="t" style="left:1207.50px;top:188.84px;font-size:25px;">117</div><div class="t" style="left:1331.50px;top:188.84px;font-size:25px;">115</div><div class="t" style="left:1447.50px;top:188.84px;font-size:25px;">96</div><div class="t" style="left:1563.50px;top:188.84px;font-size:25px;">119</div><div class="t" style="left:1679.50px;top:188.84px;font-size:25px;">111</div><div class="t" style="left:1795.50px;top:188.84px;font-size:25px;">40</div><div class="t" style="left:1953.50px;top:188.84px;font-size:25px;">---</div><div class="t" style="left:2111.50px;top:188.84px;font-size:25px;">26</div><div class="t" style="left:2269.50px;top:188.84px;font-size:25px;">33</div><div class="t" style="left:2427.50px;top:188.84px;font-size:25px;">6</div><div class="t" style="left:11.00px;top:224.84px;font-size:25px;">7</div><div class="t" style="left:107.50px;top:224.84px;font-size:25px;">16.11</div><div class="t" style="left:235.50px;top:224.84px;font-size:25px;">-0.207</div><div class="t" style="left:385.50px;top:224.84px;font-size:25px;">-0.230</div><div class="t" style="left:535.50px;top:224.84px;font-size:25px;">-0.182</div><div class="t" style="left:685.50px;top:224.84px;font-size:25px;">0.027</div><div class="t" style="left:835.50px;top:224.84px;font-size:25px;">116</div><div class="t" style="left:959.50px;top:224.84px;font-size:25px;">97</div><div class="t" style="left:1083.50px;top:224.84px;font-size:25px;">122</div><div class="t" style="left:1207.50px;top:224.84px;font-size:25px;">120</div><div class="t" style="left:1331.50px;top:224.84px;font-size:25px;">113</div><div class="t" style="left:1447.50px;top:224.84px;font-size:25px;">95</div><div class="t" style="left:1563.50px;top:224.84px;font-size:25px;">121</div><div class="t" style="left:1679.50px;top:224.84px;font-size:25px;">118</div><div class="t" style="left:1795.50px;top:224.84px;font-size:25px;">33</div><div class="t" style="left:1953.50px;top:224.84px;font-size:25px;">---</div><div class="t" style="left:2111.50px;top:224.84px;font-size:25px;">16</div><div class="t" style="left:2269.50px;top:224.84px;font-size:25px;">50</div><div class="t" style="left:2427.50px;top:224.84px;font-size:25px;">7</div><div class="t" style="left:11.00px;top:260.84px;font-size:25px;">8</div><div class="t" style="left:107.50px;top:260.84px;font-size:25px;">18.11</div><div class="t" style="left:235.50px;top:260.84px;font-size:25px;">-0.239</div><div class="t" style="left:385.50px;top:260.84px;font-size:25px;">-0.265</div><div class="t" style="left:535.50px;top:260.84px;font-size:25px;">-0.190</div><div class="t" style="left:685.50px;top:260.84px;font-size:25px;">0.063</div><div class="t" style="left:835.50px;top:260.84px;font-size:25px;">112</div><div class="t" style="left:959.50px;top:260.84px;font-size:25px;">96</div><div class="t" style="left:1083.50px;top:260.84px;font-size:25px;">114</div><div class="t" style="left:1207.50px;top:260.84px;font-size:25px;">115</div><div class="t" style="left:1331.50px;top:260.84px;font-size:25px;">111</div><div class="t" style="left:1447.50px;top:260.84px;font-size:25px;">92</div><div class="t" style="left:1563.50px;top:260.84px;font-size:25px;">115</div><div class="t" style="left:1679.50px;top:260.84px;font-size:25px;">111</div><div class="t" style="left:1795.50px;top:260.84px;font-size:25px;">40</div><div class="t" style="left:1953.50px;top:260.84px;font-size:25px;">---</div><div class="t" style="left:2111.50px;top:260.84px;font-size:25px;">13</div><div class="t" style="left:2269.50px;top:260.84px;font-size:25px;">46</div><div class="t" style="left:2427.50px;top:260.84px;font-size:25px;">8</div><div class="t" style="left:11.00px;top:296.84px;font-size:25px;">9</div><div class="t" style="left:107.50px;top:296.84px;font-size:25px;">20.11</div><div class="t" style="left:235.50px;top:296.84px;font-size:25px;">-0.238</div><div class="t" style="left:385.50px;top:296.84px;font-size:25px;">-0.195</div><div class="t" style="left:535.50px;top:296.84px;font-size:25px;">-0.189</div><div class="t" style="left:685.50px;top:296.84px;font-size:25px;">0.050</div><div class="t" style="left:835.50px;top:296.84px;font-size:25px;">110</div><div class="t" style="left:959.50px;top:296.84px;font-size:25px;">92</div><div class="t" style="left:1083.50px;top:296.84px;font-size:25px;">111</div><div class="t" style="left:1207.50px;top:296.84px;font-size:25px;">113</div><div class="t" style="left:1331.50px;top:296.84px;font-size:25px;">107</div><div class="t" style="left:1447.50px;top:296.84px;font-size:25px;">83</div><div class="t" style="left:1563.50px;top:296.84px;font-size:25px;">109</div><div class="t" style="left:1679.50px;top:296.84px;font-size:25px;">107</div><div class="t" style="left:1795.50px;top:296.84px;font-size:25px;">50</div><div class="t" style="left:1953.50px;top:296.84px;font-size:25px;">---</div><div class="t" style="left:2111.50px;top:296.84px;font-size:25px;">13</div><div class="t" style="left:2269.50px;top:296.84px;font-size:25px;">26</div><div class="t" style="left:2427.50px;top:296.84px;font-size:25px;">9</div><div class="t" style="left:11.00px;top:332.84px;font-size:25px;">10</div><div class="t" style="left:107.50px;top:332.84px;font-size:25px;">22.11</div><div class="t" style="left:235.50px;top:332.84px;font-size:25px;">-0.169</div><div class="t" style="left:385.50px;top:332.84px;font-size:25px;">-0.186</div><div class="t" style="left:535.50px;top:332.84px;font-size:25px;">-0.183</div><div class="t" style="left:685.50px;top:332.84px;font-size:25px;">0.034</div><div class="t" style="left:835.50px;top:332.84px;font-size:25px;">101</div><div class="t" style="left:959.50px;top:332.84px;font-size:25px;">88</div><div class="t" style="left:1083.50px;top:332.84px;font-size:25px;">95</div><div class="t" style="left:1207.50px;top:332.84px;font-size:25px;">101</div><div class="t" style="left:1331.50px;top:332.84px;font-size:25px;">97</div><div class="t" style="left:1447.50px;top:332.84px;font-size:25px;">77</div><div class="t" style="left:1563.50px;top:332.84px;font-size:25px;">97</div><div class="t" style="left:1679.50px;top:332.84px;font-size:25px;">99</div><div class="t" style="left:1795.50px;top:332.84px;font-size:25px;">43</div><div class="t" style="left:1953.50px;top:332.84px;font-size:25px;">---</div><div class="t" style="left:2111.50px;top:332.84px;font-size:25px;">13</div><div class="t" style="left:2269.50px;top:332.84px;font-size:25px;">43</div><div class="t" style="left:2427.50px;top:332.84px;font-size:25px;">10</div><div class="t" style="left:11.00px;top:368.84px;font-size:25px;">11</div><div class="t" style="left:107.50px;top:368.84px;font-size:25px;">24.11</div><div class="t" style="left:235.50px;top:368.84px;font-size:25px;">-0.236</div><div class="t" style="left:385.50px;top:368.84px;font-size:25px;">-0.188</div><div class="t" style="left:535.50px;top:368.84px;font-size:25px;">-0.204</div><div class="t" style="left:685.50px;top:368.84px;font-size:25px;">-0.019</div><div class="t" style="left:835.50px;top:368.84px;font-size:25px;">95</div><div class="t" style="left:959.50px;top:368.84px;font-size:25px;">85</div><div class="t" style="left:1083.50px;top:368.84px;font-size:25px;">95</div><div class="t" style="left:1207.50px;top:368.84px;font-size:25px;">94</div><div class="t" style="left:1331.50px;top:368.84px;font-size:25px;">89</div><div class="t" style="left:1447.50px;top:368.84px;font-size:25px;">60</div><div class="t" style="left:1563.50px;top:368.84px;font-size:25px;">87</div><div class="t" style="left:1679.50px;top:368.84px;font-size:25px;">90</div><div class="t" style="left:1795.50px;top:368.84px;font-size:25px;">26</div><div class="t" style="left:1953.50px;top:368.84px;font-size:25px;">---</div><div class="t" style="left:2111.50px;top:368.84px;font-size:25px;">20</div><div class="t" style="left:2269.50px;top:368.84px;font-size:25px;">53</div><div class="t" style="left:2427.50px;top:368.84px;font-size:25px;">11</div><div class="t" style="left:11.00px;top:404.84px;font-size:25px;">12</div><div class="t" style="left:107.50px;top:404.84px;font-size:25px;">26.11</div><div class="t" style="left:235.50px;top:404.84px;font-size:25px;">-0.127</div><div class="t" style="left:385.50px;top:404.84px;font-size:25px;">-0.272</div><div class="t" style="left:535.50px;top:404.84px;font-size:25px;">-0.176</div><div class="t" style="left:685.50px;top:404.84px;font-size:25px;">0.157</div><div class="t" style="left:835.50px;top:404.84px;font-size:25px;">92</div><div class="t" style="left:959.50px;top:404.84px;font-size:25px;">84</div><div class="t" style="left:1083.50px;top:404.84px;font-size:25px;">95</div><div class="t" style="left:1207.50px;top:404.84px;font-size:25px;">92</div><div class="t" style="left:1331.50px;top:404.84px;font-size:25px;">84</div><div class="t" style="left:1447.50px;top:404.84px;font-size:25px;">64</div><div class="t" style="left:1563.50px;top:404.84px;font-size:25px;">95</div><div class="t" style="left:1679.50px;top:404.84px;font-size:25px;">83</div><div class="t" style="left:1795.50px;top:404.84px;font-size:25px;">53</div><div class="t" style="left:1953.50px;top:404.84px;font-size:25px;">---</div><div class="t" style="left:2111.50px;top:404.84px;font-size:25px;">20</div><div class="t" style="left:2269.50px;top:404.84px;font-size:25px;">26</div><div class="t" style="left:2427.50px;top:404.84px;font-size:25px;">12</div><div class="t" style="left:11.00px;top:440.84px;font-size:25px;">13</div><div class="t" style="left:107.50px;top:440.84px;font-size:25px;">28.11</div><div class="t" style="left:235.50px;top:440.84px;font-size:25px;">-0.191</div><div class="t" style="left:385.50px;top:440.84px;font-size:25px;">-0.184</div><div class="t" style="left:535.50px;top:440.84px;font-size:25px;">-0.179</div><div class="t" style="left:685.50px;top:440.84px;font-size:25px;">-0.046</div><div class="t" style="left:835.50px;top:440.84px;font-size:25px;">94</div><div class="t" style="left:959.50px;top:440.84px;font-size:25px;">79</div><div class="t" style="left:1083.50px;top:440.84px;font-size:25px;">87</div><div class="t" style="left:1207.50px;top:440.84px;font-size:25px;">87</div><div class="t" style="left:1331.50px;top:440.84px;font-size:25px;">83</div><div class="t" style="left:1447.50px;top:440.84px;font-size:25px;">48</div><div class="t" style="left:1563.50px;top:440.84px;font-size:25px;">80</div><div class="t" style="left:1679.50px;top:440.84px;font-size:25px;">66</div><div class="t" style="left:1795.50px;top:440.84px;font-size:25px;">26</div><div class="t" style="left:1953.50px;top:440.84px;font-size:25px;">---</div><div class="t" style="left:2111.50px;top:440.84px;font-size:25px;">30</div><div class="t" style="left:2269.50px;top:440.84px;font-size:25px;">43</div><div class="t" style="left:2427.50px;top:440.84px;font-size:25px;">13</div><div class="t" style="left:11.00px;top:476.84px;font-size:25px;">14</div><div class="t" style="left:107.50px;top:476.84px;font-size:25px;">30.11</div><div class="t" style="left:235.50px;top:476.84px;font-size:25px;">-0.126</div><div class="t" style="left:385.50px;top:476.84px;font-size:25px;">-0.165</div><div class="t" style="left:535.50px;top:476.84px;font-size:25px;">-0.165</div><div class="t" style="left:685.50px;top:476.84px;font-size:25px;">0.049</div><div class="t" style="left:835.50px;top:476.84px;font-size:25px;">93</div><div class="t" style="left:959.50px;top:476.84px;font-size:25px;">79</div><div class="t" style="left:1083.50px;top:476.84px;font-size:25px;">90</div><div class="t" style="left:1207.50px;top:476.84px;font-size:25px;">91</div><div class="t" style="left:1331.50px;top:476.84px;font-size:25px;">88</div><div class="t" style="left:1447.50px;top:476.84px;font-size:25px;">55</div><div class="t" style="left:1563.50px;top:476.84px;font-size:25px;">86</div><div class="t" style="left:1679.50px;top:476.84px;font-size:25px;">80</div><div class="t" style="left:1795.50px;top:476.84px;font-size:25px;">43</div><div class="t" style="left:1953.50px;top:476.84px;font-size:25px;">---</div><div class="t" style="left:2111.50px;top:476.84px;font-size:25px;">26</div><div class="t" style="left:2269.50px;top:476.84px;font-size:25px;">30</div><div class="t" style="left:2427.50px;top:476.84px;font-size:25px;">14</div><div class="t" style="left:11.00px;top:512.84px;font-size:25px;">15</div><div class="t" style="left:107.50px;top:512.84px;font-size:25px;">32.11</div><div class="t" style="left:235.50px;top:512.84px;font-size:25px;">-0.173</div><div class="t" style="left:385.50px;top:512.84px;font-size:25px;">-0.141</div><div class="t" style="left:535.50px;top:512.84px;font-size:25px;">-0.144</div><div class="t" style="left:685.50px;top:512.84px;font-size:25px;">0.044</div><div class="t" style="left:835.50px;top:512.84px;font-size:25px;">97</div><div class="t" style="left:959.50px;top:512.84px;font-size:25px;">80</div><div class="t" style="left:1083.50px;top:512.84px;font-size:25px;">93</div><div class="t" style="left:1207.50px;top:512.84px;font-size:25px;">98</div><div class="t" style="left:1331.50px;top:512.84px;font-size:25px;">96</div><div class="t" style="left:1447.50px;top:512.84px;font-size:25px;">49</div><div class="t" style="left:1563.50px;top:512.84px;font-size:25px;">101</div><div class="t" style="left:1679.50px;top:512.84px;font-size:25px;">88</div><div class="t" style="left:1795.50px;top:512.84px;font-size:25px;">50</div><div class="t" style="left:1953.50px;top:512.84px;font-size:25px;">---</div><div class="t" style="left:2111.50px;top:512.84px;font-size:25px;">26</div><div class="t" style="left:2269.50px;top:512.84px;font-size:25px;">23</div><div class="t" style="left:2427.50px;top:512.84px;font-size:25px;">15</div><div class="t" style="left:11.00px;top:548.84px;font-size:25px;">16</div><div class="t" style="left:107.50px;top:548.84px;font-size:25px;">34.11</div><div class="t" style="left:235.50px;top:548.84px;font-size:25px;">-0.230</div><div class="t" style="left:385.50px;top:548.84px;font-size:25px;">-0.115</div><div class="t" style="left:535.50px;top:548.84px;font-size:25px;">-0.157</div><div class="t" style="left:685.50px;top:548.84px;font-size:25px;">-0.068</div><div class="t" style="left:835.50px;top:548.84px;font-size:25px;">93</div><div class="t" style="left:959.50px;top:548.84px;font-size:25px;">78</div><div class="t" style="left:1083.50px;top:548.84px;font-size:25px;">90</div><div class="t" style="left:1207.50px;top:548.84px;font-size:25px;">91</div><div class="t" style="left:1331.50px;top:548.84px;font-size:25px;">90</div><div class="t" style="left:1447.50px;top:548.84px;font-size:25px;">52</div><div class="t" style="left:1563.50px;top:548.84px;font-size:25px;">90</div><div class="t" style="left:1679.50px;top:548.84px;font-size:25px;">87</div><div class="t" style="left:1795.50px;top:548.84px;font-size:25px;">60</div><div class="t" style="left:1953.50px;top:548.84px;font-size:25px;">---</div><div class="t" style="left:2111.50px;top:548.84px;font-size:25px;">23</div><div class="t" style="left:2269.50px;top:548.84px;font-size:25px;">16</div><div class="t" style="left:2427.50px;top:548.84px;font-size:25px;">16</div><div class="t" style="left:11.00px;top:584.84px;font-size:25px;">17</div><div class="t" style="left:107.50px;top:584.84px;font-size:25px;">36.11</div><div class="t" style="left:235.50px;top:584.84px;font-size:25px;">-0.130</div><div class="t" style="left:385.50px;top:584.84px;font-size:25px;">-0.284</div><div class="t" style="left:535.50px;top:584.84px;font-size:25px;">-0.163</div><div class="t" style="left:685.50px;top:584.84px;font-size:25px;">0.256</div><div class="t" style="left:835.50px;top:584.84px;font-size:25px;">91</div><div class="t" style="left:959.50px;top:584.84px;font-size:25px;">77</div><div class="t" style="left:1083.50px;top:584.84px;font-size:25px;">83</div><div class="t" style="left:1207.50px;top:584.84px;font-size:25px;">86</div><div class="t" style="left:1331.50px;top:584.84px;font-size:25px;">84</div><div class="t" style="left:1447.50px;top:584.84px;font-size:25px;">43</div><div class="t" style="left:1563.50px;top:584.84px;font-size:25px;">79</div><div class="t" style="left:1679.50px;top:584.84px;font-size:25px;">75</div><div class="t" style="left:1795.50px;top:584.84px;font-size:25px;">43</div><div class="t" style="left:1953.50px;top:584.84px;font-size:25px;">---</div><div class="t" style="left:2111.50px;top:584.84px;font-size:25px;">40</div><div class="t" style="left:2269.50px;top:584.84px;font-size:25px;">16</div><div class="t" style="left:2427.50px;top:584.84px;font-size:25px;">17</div><div class="t" style="left:11.00px;top:620.84px;font-size:25px;">18</div><div class="t" style="left:107.50px;top:620.84px;font-size:25px;">38.11</div><div class="t" style="left:235.50px;top:620.84px;font-size:25px;">-0.066</div><div class="t" style="left:385.50px;top:620.84px;font-size:25px;">-0.272</div><div class="t" style="left:535.50px;top:620.84px;font-size:25px;">-0.111</div><div class="t" style="left:685.50px;top:620.84px;font-size:25px;">---</div><div class="t" style="left:835.50px;top:620.84px;font-size:25px;">84</div><div class="t" style="left:959.50px;top:620.84px;font-size:25px;">75</div><div class="t" style="left:1083.50px;top:620.84px;font-size:25px;">80</div><div class="t" style="left:1207.50px;top:620.84px;font-size:25px;">86</div><div class="t" style="left:1331.50px;top:620.84px;font-size:25px;">67</div><div class="t" style="left:1447.50px;top:620.84px;font-size:25px;">38</div><div class="t" style="left:1563.50px;top:620.84px;font-size:25px;">64</div><div class="t" style="left:1679.50px;top:620.84px;font-size:25px;">68</div><div class="t" style="left:1795.50px;top:620.84px;font-size:25px;">16</div><div class="t" style="left:1953.50px;top:620.84px;font-size:25px;">---</div><div class="t" style="left:2111.50px;top:620.84px;font-size:25px;">83</div><div class="t" style="left:2269.50px;top:620.84px;font-size:25px;">---</div><div class="t" style="left:2427.50px;top:620.84px;font-size:25px;">18</div><div class="t" style="left:11.00px;top:656.84px;font-size:25px;">19</div><div class="t" style="left:107.50px;top:656.84px;font-size:25px;">40.11</div><div class="t" style="left:235.50px;top:656.84px;font-size:25px;">0.042</div><div class="t" style="left:385.50px;top:656.84px;font-size:25px;">-0.247</div><div class="t" style="left:535.50px;top:656.84px;font-size:25px;">-0.131</div><div class="t" style="left:685.50px;top:656.84px;font-size:25px;">---</div><div class="t" style="left:835.50px;top:656.84px;font-size:25px;">85</div><div class="t" style="left:959.50px;top:656.84px;font-size:25px;">74</div><div class="t" style="left:1083.50px;top:656.84px;font-size:25px;">81</div><div class="t" style="left:1207.50px;top:656.84px;font-size:25px;">85</div><div class="t" style="left:1331.50px;top:656.84px;font-size:25px;">61</div><div class="t" style="left:1447.50px;top:656.84px;font-size:25px;">25</div><div class="t" style="left:1563.50px;top:656.84px;font-size:25px;">71</div><div class="t" style="left:1679.50px;top:656.84px;font-size:25px;">61</div><div class="t" style="left:1795.50px;top:656.84px;font-size:25px;">13</div><div class="t" style="left:1953.50px;top:656.84px;font-size:25px;">---</div><div class="t" style="left:2111.50px;top:656.84px;font-size:25px;">86</div><div class="t" style="left:2269.50px;top:656.84px;font-size:25px;">---</div><div class="t" style="left:2427.50px;top:656.84px;font-size:25px;">19</div><div class="t" style="left:11.00px;top:692.84px;font-size:25px;">20</div><div class="t" style="left:107.50px;top:692.84px;font-size:25px;">42.11</div><div class="t" style="left:235.50px;top:692.84px;font-size:25px;">-0.464</div><div class="t" style="left:385.50px;top:692.84px;font-size:25px;">-0.125</div><div class="t" style="left:535.50px;top:692.84px;font-size:25px;">-0.180</div><div class="t" style="left:685.50px;top:692.84px;font-size:25px;">---</div><div class="t" style="left:835.50px;top:692.84px;font-size:25px;">84</div><div class="t" style="left:959.50px;top:692.84px;font-size:25px;">74</div><div class="t" style="left:1083.50px;top:692.84px;font-size:25px;">78</div><div class="t" style="left:1207.50px;top:692.84px;font-size:25px;">83</div><div class="t" style="left:1331.50px;top:692.84px;font-size:25px;">62</div><div class="t" style="left:1447.50px;top:692.84px;font-size:25px;">28</div><div class="t" style="left:1563.50px;top:692.84px;font-size:25px;">64</div><div class="t" style="left:1679.50px;top:692.84px;font-size:25px;">53</div><div class="t" style="left:1795.50px;top:692.84px;font-size:25px;">10</div><div class="t" style="left:1953.50px;top:692.84px;font-size:25px;">---</div><div class="t" style="left:2111.50px;top:692.84px;font-size:25px;">90</div><div class="t" style="left:2269.50px;top:692.84px;font-size:25px;">---</div><div class="t" style="left:2427.50px;top:692.84px;font-size:25px;">20</div><div class="t" style="left:11.00px;top:728.84px;font-size:25px;">21</div><div class="t" style="left:107.50px;top:728.84px;font-size:25px;">44.11</div><div class="t" style="left:235.50px;top:728.84px;font-size:25px;">-0.165</div><div class="t" style="left:385.50px;top:728.84px;font-size:25px;">-0.301</div><div class="t" style="left:535.50px;top:728.84px;font-size:25px;">-0.135</div><div class="t" style="left:685.50px;top:728.84px;font-size:25px;">---</div><div class="t" style="left:835.50px;top:728.84px;font-size:25px;">81</div><div class="t" style="left:959.50px;top:728.84px;font-size:25px;">73</div><div class="t" style="left:1083.50px;top:728.84px;font-size:25px;">78</div><div class="t" style="left:1207.50px;top:728.84px;font-size:25px;">82</div><div class="t" style="left:1331.50px;top:728.84px;font-size:25px;">62</div><div class="t" style="left:1447.50px;top:728.84px;font-size:25px;">24</div><div class="t" style="left:1563.50px;top:728.84px;font-size:25px;">62</div><div class="t" style="left:1679.50px;top:728.84px;font-size:25px;">48</div><div class="t" style="left:1795.50px;top:728.84px;font-size:25px;">3</div><div class="t" style="left:1953.50px;top:728.84px;font-size:25px;">---</div><div class="t" style="left:2111.50px;top:728.84px;font-size:25px;">96</div><div class="t" style="left:2269.50px;top:728.84px;font-size:25px;">---</div><div class="t" style="left:2427.50px;top:728.84px;font-size:25px;">21</div><div class="t" style="left:11.00px;top:764.84px;font-size:25px;">22</div><div class="t" style="left:107.50px;top:764.84px;font-size:25px;">46.11</div><div class="t" style="left:235.50px;top:764.84px;font-size:25px;">---</div><div class="t" style="left:385.50px;top:764.84px;font-size:25px;">---</div><div class="t" style="left:535.50px;top:764.84px;font-size:25px;">---</div><div class="t" style="left:685.50px;top:764.84px;font-size:25px;">---</div><div class="t" style="left:835.50px;top:764.84px;font-size:25px;">79</div><div class="t" style="left:959.50px;top:764.84px;font-size:25px;">72</div><div class="t" style="left:1083.50px;top:764.84px;font-size:25px;">75</div><div class="t" style="left:1207.50px;top:764.84px;font-size:25px;">79</div><div class="t" style="left:1331.50px;top:764.84px;font-size:25px;">42</div><div class="t" style="left:1447.50px;top:764.84px;font-size:25px;">19</div><div class="t" style="left:1563.50px;top:764.84px;font-size:25px;">52</div><div class="t" style="left:1679.50px;top:764.84px;font-size:25px;">35</div><div class="t" style="left:1795.50px;top:764.84px;font-size:25px;">---</div><div class="t" style="left:1953.50px;top:764.84px;font-size:25px;">---</div><div class="t" style="left:2111.50px;top:764.84px;font-size:25px;">100</div><div class="t" style="left:2269.50px;top:764.84px;font-size:25px;">---</div><div class="t" style="left:2427.50px;top:764.84px;font-size:25px;">22</div><div class="t" style="left:11.00px;top:800.84px;font-size:25px;">23</div><div class="t" style="left:107.50px;top:800.84px;font-size:25px;">48.11</div><div class="t" style="left:235.50px;top:800.84px;font-size:25px;">---</div><div class="t" style="left:385.50px;top:800.84px;font-size:25px;">---</div><div class="t" style="left:535.50px;top:800.84px;font-size:25px;">---</div><div class="t" style="left:685.50px;top:800.84px;font-size:25px;">---</div><div class="t" style="left:835.50px;top:800.84px;font-size:25px;">78</div><div class="t" style="left:959.50px;top:800.84px;font-size:25px;">73</div><div class="t" style="left:1083.50px;top:800.84px;font-size:25px;">74</div><div class="t" style="left:1207.50px;top:800.84px;font-size:25px;">80</div><div class="t" style="left:1331.50px;top:800.84px;font-size:25px;">34</div><div class="t" style="left:1447.50px;top:800.84px;font-size:25px;">16</div><div class="t" style="left:1563.50px;top:800.84px;font-size:25px;">41</div><div class="t" style="left:1679.50px;top:800.84px;font-size:25px;">29</div><div class="t" style="left:1795.50px;top:800.84px;font-size:25px;">---</div><div class="t" style="left:1953.50px;top:800.84px;font-size:25px;">---</div><div class="t" style="left:2111.50px;top:800.84px;font-size:25px;">100</div><div class="t" style="left:2269.50px;top:800.84px;font-size:25px;">---</div><div class="t" style="left:2427.50px;top:800.84px;font-size:25px;">23</div><div class="t" style="left:11.00px;top:836.84px;font-size:25px;">24</div><div class="t" style="left:107.50px;top:836.84px;font-size:25px;">50.11</div><div class="t" style="left:235.50px;top:836.84px;font-size:25px;">---</div><div class="t" style="left:385.50px;top:836.84px;font-size:25px;">---</div><div class="t" style="left:535.50px;top:836.84px;font-size:25px;">---</div><div class="t" style="left:685.50px;top:836.84px;font-size:25px;">---</div><div class="t" style="left:835.50px;top:836.84px;font-size:25px;">78</div><div class="t" style="left:959.50px;top:836.84px;font-size:25px;">72</div><div class="t" style="left:1083.50px;top:836.84px;font-size:25px;">73</div><div class="t" style="left:1207.50px;top:836.84px;font-size:25px;">79</div><div class="t" style="left:1331.50px;top:836.84px;font-size:25px;">28</div><div class="t" style="left:1447.50px;top:836.84px;font-size:25px;">17</div><div class="t" style="left:1563.50px;top:836.84px;font-size:25px;">39</div><div class="t" style="left:1679.50px;top:836.84px;font-size:25px;">26</div><div class="t" style="left:1795.50px;top:836.84px;font-size:25px;">---</div><div class="t" style="left:1953.50px;top:836.84px;font-size:25px;">---</div><div class="t" style="left:2111.50px;top:836.84px;font-size:25px;">100</div><div class="t" style="left:2269.50px;top:836.84px;font-size:25px;">---</div><div class="t" style="left:2427.50px;top:836.84px;font-size:25px;">24</div><div class="t" style="left:11.00px;top:872.84px;font-size:25px;">25</div><div class="t" style="left:107.50px;top:872.84px;font-size:25px;">52.11</div><div class="t" style="left:235.50px;top:872.84px;font-size:25px;">---</div><div class="t" style="left:385.50px;top:872.84px;font-size:25px;">---</div><div class="t" style="left:535.50px;top:872.84px;font-size:25px;">---</div><div class="t" style="left:685.50px;top:872.84px;font-size:25px;">---</div><div class="t" style="left:835.50px;top:872.84px;font-size:25px;">77</div><div class="t" style="left:959.50px;top:872.84px;font-size:25px;">71</div><div class="t" style="left:1083.50px;top:872.84px;font-size:25px;">72</div><div class="t" style="left:1207.50px;top:872.84px;font-size:25px;">78</div><div class="t" style="left:1331.50px;top:872.84px;font-size:25px;">30</div><div class="t" style="left:1447.50px;top:872.84px;font-size:25px;">16</div><div class="t" style="left:1563.50px;top:872.84px;font-size:25px;">32</div><div class="t" style="left:1679.50px;top:872.84px;font-size:25px;">21</div><div class="t" style="left:1795.50px;top:872.84px;font-size:25px;">---</div><div class="t" style="left:1953.50px;top:872.84px;font-size:25px;">---</div><div class="t" style="left:2111.50px;top:872.84px;font-size:25px;">100</div><div class="t" style="left:2269.50px;top:872.84px;font-size:25px;">---</div><div class="t" style="left:2427.50px;top:872.84px;font-size:25px;">25</div><div class="t" style="left:11.00px;top:908.84px;font-size:25px;">26</div><div class="t" style="left:107.50px;top:908.84px;font-size:25px;">54.11</div><div class="t" style="left:235.50px;top:908.84px;font-size:25px;">---</div><div class="t" style="left:385.50px;top:908.84px;font-size:25px;">---</div><div class="t" style="left:535.50px;top:908.84px;font-size:25px;">---</div><div class="t" style="left:685.50px;top:908.84px;font-size:25px;">---</div><div class="t" style="left:835.50px;top:908.84px;font-size:25px;">76</div><div class="t" style="left:959.50px;top:908.84px;font-size:25px;">72</div><div class="t" style="left:1083.50px;top:908.84px;font-size:25px;">72</div><div class="t" style="left:1207.50px;top:908.84px;font-size:25px;">78</div><div class="t" style="left:1331.50px;top:908.84px;font-size:25px;">27</div><div class="t" style="left:1447.50px;top:908.84px;font-size:25px;">14</div><div class="t" style="left:1563.50px;top:908.84px;font-size:25px;">31</div><div class="t" style="left:1679.50px;top:908.84px;font-size:25px;">24</div><div class="t" style="left:1795.50px;top:908.84px;font-size:25px;">---</div><div class="t" style="left:1953.50px;top:908.84px;font-size:25px;">---</div><div class="t" style="left:2111.50px;top:908.84px;font-size:25px;">100</div><div class="t" style="left:2269.50px;top:908.84px;font-size:25px;">---</div><div class="t" style="left:2427.50px;top:908.84px;font-size:25px;">26</div><div class="t" style="left:11.00px;top:944.84px;font-size:25px;">27</div><div class="t" style="left:107.50px;top:944.84px;font-size:25px;">56.11</div><div class="t" style="left:235.50px;top:944.84px;font-size:25px;">---</div><div class="t" style="left:385.50px;top:944.84px;font-size:25px;">---</div><div class="t" style="left:535.50px;top:944.84px;font-size:25px;">---</div><div class="t" style="left:685.50px;top:944.84px;font-size:25px;">---</div><div class="t" style="left:835.50px;top:944.84px;font-size:25px;">76</div><div class="t" style="left:959.50px;top:944.84px;font-size:25px;">72</div><div class="t" style="left:1083.50px;top:944.84px;font-size:25px;">71</div><div class="t" style="left:1207.50px;top:944.84px;font-size:25px;">77</div><div class="t" style="left:1331.50px;top:944.84px;font-size:25px;">19</div><div class="t" style="left:1447.50px;top:944.84px;font-size:25px;">15</div><div class="t" style="left:1563.50px;top:944.84px;font-size:25px;">24</div><div class="t" style="left:1679.50px;top:944.84px;font-size:25px;">19</div><div class="t" style="left:1795.50px;top:944.84px;font-size:25px;">---</div><div class="t" style="left:1953.50px;top:944.84px;font-size:25px;">---</div><div class="t" style="left:2111.50px;top:944.84px;font-size:25px;">100</div><div class="t" style="left:2269.50px;top:944.84px;font-size:25px;">---</div><div class="t" style="left:2427.50px;top:944.84px;font-size:25px;">27</div><div class="t" style="left:11.00px;top:980.84px;font-size:25px;">28</div><div class="t" style="left:107.50px;top:980.84px;font-size:25px;">58.11</div><div class="t" style="left:235.50px;top:980.84px;font-size:25px;">---</div><div class="t" style="left:385.50px;top:980.84px;font-size:25px;">---</div><div class="t" style="left:535.50px;top:980.84px;font-size:25px;">---</div><div class="t" style="left:685.50px;top:980.84px;font-size:25px;">---</div><div class="t" style="left:835.50px;top:980.84px;font-size:25px;">76</div><div class="t" style="left:959.50px;top:980.84px;font-size:25px;">71</div><div class="t" style="left:1083.50px;top:980.84px;font-size:25px;">70</div><div class="t" style="left:1207.50px;top:980.84px;font-size:25px;">77</div><div class="t" style="left:1331.50px;top:980.84px;font-size:25px;">17</div><div class="t" style="left:1447.50px;top:980.84px;font-size:25px;">14</div><div class="t" style="left:1563.50px;top:980.84px;font-size:25px;">19</div><div class="t" style="left:1679.50px;top:980.84px;font-size:25px;">15</div><div class="t" style="left:1795.50px;top:980.84px;font-size:25px;">---</div><div class="t" style="left:1953.50px;top:980.84px;font-size:25px;">---</div><div class="t" style="left:2111.50px;top:980.84px;font-size:25px;">100</div><div class="t" style="left:2269.50px;top:980.84px;font-size:25px;">---</div><div class="t" style="left:2427.50px;top:980.84px;font-size:25px;">28</div><div class="t" style="left:11.00px;top:1016.84px;font-size:25px;">29</div><div class="t" style="left:107.50px;top:1016.84px;font-size:25px;">60.11</div><div class="t" style="left:235.50px;top:1016.84px;font-size:25px;">---</div><div class="t" style="left:385.50px;top:1016.84px;font-size:25px;">---</div><div class="t" style="left:535.50px;top:1016.84px;font-size:25px;">---</div><div class="t" style="left:685.50px;top:1016.84px;font-size:25px;">---</div><div class="t" style="left:835.50px;top:1016.84px;font-size:25px;">75</div><div class="t" style="left:959.50px;top:1016.84px;font-size:25px;">71</div><div class="t" style="left:1083.50px;top:1016.84px;font-size:25px;">71</div><div class="t" style="left:1207.50px;top:1016.84px;font-size:25px;">77</div><div class="t" style="left:1331.50px;top:1016.84px;font-size:25px;">16</div><div class="t" style="left:1447.50px;top:1016.84px;font-size:25px;">14</div><div class="t" style="left:1563.50px;top:1016.84px;font-size:25px;">17</div><div class="t" style="left:1679.50px;top:1016.84px;font-size:25px;">15</div><div class="t" style="left:1795.50px;top:1016.84px;font-size:25px;">---</div><div class="t" style="left:1953.50px;top:1016.84px;font-size:25px;">---</div><div class="t" style="left:2111.50px;top:1016.84px;font-size:25px;">100</div><div class="t" style="left:2269.50px;top:1016.84px;font-size:25px;">---</div><div class="t" style="left:2427.50px;top:1016.84px;font-size:25px;">29</div></div><div class="r" style="left:2844px;top:614px;width:34px;height:1066px;background:#f0f0f0;"></div><div class="r" style="left:2844px;top:648px;width:30px;height:558px;background:#cdcdcd;"></div><svg class="r" style="left:2850px;top:624px" width="18" height="16" viewBox="0 0 18 16"><path d="M2 13 L9 5 L16 13" fill="none" stroke="#606060" stroke-width="3.2"/></svg><svg class="r" style="left:2850px;top:1654px" width="18" height="16" viewBox="0 0 18 16"><path d="M2 3 L9 11 L16 3" fill="none" stroke="#606060" stroke-width="3.2"/></svg><div class="r" style="left:1934px;top:960px;width:740px;height:561px;background:#fff;box-shadow:inset 0 0 0 1px #a6a6a6,3px 5px 12px rgba(0,0,0,0.2)"></div><svg class="r" style="left:1952px;top:978px" width="32" height="26" viewBox="0 0 32 26"><rect x="0.5" y="0.5" width="31" height="24" fill="#eee" stroke="#9aa" /><defs><linearGradient id="gg" x1="0" y1="0" x2="1" y2="1"><stop offset="0" stop-color="#3a6aa8"/><stop offset="1" stop-color="#5cc070"/></linearGradient></defs><rect x="2" y="4" width="14" height="18" fill="url(#gg)"/><path d="M18 5 H24 M18 8 H24 M18 11 H24 M18 14 H24 M18 19 H24" stroke="#ccc" stroke-width="1.2"/><rect x="25" y="4" width="4" height="11" fill="#4a8a88"/></svg><div class="t" style="left:1990.00px;top:977.99px;font-size:26px;color:#999;transform:scale(0.9865,1.0622);transform-origin:0 22.01px;">NMEA Communication</div><svg class="r" style="left:2628px;top:979px" width="22" height="22" viewBox="0 0 22 22"><path d="M1 1 L21 21 M21 1 L1 21" stroke="#999" stroke-width="1.6"/></svg><div class="r" style="left:1934px;top:1022px;width:2px;height:499px;background:#a0a0a0;"></div><div class="r" style="left:1936px;top:1022px;width:704px;height:498px;overflow:hidden"><div class="t" style="left:1.50px;top:3.49px;font-size:26px;font-weight:bold;transform:scale(1.0420,1.0000);transform-origin:0 22.01px;">NMEA Heading data can now be read from its primary</div><div class="t" style="left:1.50px;top:35.49px;font-size:26px;font-weight:bold;transform:scale(1.0420,1.0000);transform-origin:0 22.01px;">PRIMARY NMEA Heading data will be stored in the NAV field</div><div class="t" style="left:1.50px;top:67.49px;font-size:26px;font-weight:bold;transform:scale(1.0420,1.0000);transform-origin:0 22.01px;">NMEA Heading data is now unavailable from its primary</div><div class="t" style="left:1.50px;top:99.49px;font-size:26px;font-weight:bold;transform:scale(1.0420,1.0000);transform-origin:0 22.01px;">NO NMEA Heading data will be stored in the NAV field</div><div class="t" style="left:1.50px;top:131.49px;font-size:26px;font-weight:bold;transform:scale(1.0420,1.0000);transform-origin:0 22.01px;">NMEA Heading data can now be read from its primary</div><div class="t" style="left:1.50px;top:163.49px;font-size:26px;font-weight:bold;transform:scale(1.0420,1.0000);transform-origin:0 22.01px;">PRIMARY NMEA Heading data will be stored in the NAV field</div><div class="t" style="left:1.50px;top:195.49px;font-size:26px;font-weight:bold;transform:scale(1.0420,1.0000);transform-origin:0 22.01px;">NMEA Heading data is now unavailable from its primary</div><div class="t" style="left:1.50px;top:227.49px;font-size:26px;font-weight:bold;transform:scale(1.0420,1.0000);transform-origin:0 22.01px;">NO NMEA Heading data will be stored in the NAV field</div><div class="t" style="left:1.50px;top:259.49px;font-size:26px;font-weight:bold;transform:scale(1.0420,1.0000);transform-origin:0 22.01px;">NMEA Heading data can now be read from its primary</div><div class="t" style="left:1.50px;top:291.49px;font-size:26px;font-weight:bold;transform:scale(1.0420,1.0000);transform-origin:0 22.01px;">PRIMARY NMEA Heading data will be stored in the NAV field</div><div class="t" style="left:1.50px;top:323.49px;font-size:26px;font-weight:bold;transform:scale(1.0420,1.0000);transform-origin:0 22.01px;">NMEA Heading data is now unavailable from its primary</div><div class="t" style="left:1.50px;top:355.49px;font-size:26px;font-weight:bold;transform:scale(1.0420,1.0000);transform-origin:0 22.01px;">NO NMEA Heading data will be stored in the NAV field</div><div class="t" style="left:1.50px;top:387.49px;font-size:26px;font-weight:bold;transform:scale(1.0420,1.0000);transform-origin:0 22.01px;">NMEA Heading data can now be read from its primary</div><div class="t" style="left:1.50px;top:419.49px;font-size:26px;font-weight:bold;transform:scale(1.0420,1.0000);transform-origin:0 22.01px;">PRIMARY NMEA Heading data will be stored in the NAV field</div></div><div class="r" style="left:2640px;top:1022px;width:32px;height:498px;background:#f0f0f0;"></div><div class="r" style="left:2640px;top:1452px;width:30px;height:34px;background:#cdcdcd;"></div><svg class="r" style="left:2646px;top:1032px" width="18" height="16" viewBox="0 0 18 16"><path d="M2 13 L9 5 L16 13" fill="none" stroke="#606060" stroke-width="3.2"/></svg><svg class="r" style="left:2646px;top:1496px" width="18" height="16" viewBox="0 0 18 16"><path d="M2 3 L9 11 L16 3" fill="none" stroke="#606060" stroke-width="3.2"/></svg><div class="r" style="left:0px;top:1682px;width:2880px;height:38px;background:#f0f0f0;"></div><div class="r" style="left:2408px;top:1686px;width:36px;height:34px;background:#00ff00;box-shadow:inset 0 0 0 2px #000,0 0 0 1px #fff"></div><div class="r" style="left:2448px;top:1686px;width:192px;height:32px;box-shadow:inset 2px 2px #a0a0a0,0 2px #fff"></div><div class="t" style="left:2453.00px;top:1690.84px;font-size:25px;">Ens Good</div><div class="r" style="left:2646px;top:1686px;width:36px;height:34px;background:#00ff00;box-shadow:inset 0 0 0 2px #000,0 0 0 1px #fff"></div><div class="r" style="left:2686px;top:1686px;width:192px;height:32px;box-shadow:inset 2px 2px #a0a0a0,0 2px #fff"></div><div class="t" style="left:2691.00px;top:1690.84px;font-size:25px;transform:scale(1.0455,1.0000);transform-origin:0 21.16px;">NAV Good</div><div class="r" style="left:0px;top:1720px;width:2880px;height:80px;background:#0a0d14;"></div><svg class="r" style="left:30px;top:1742px" width="36" height="36" viewBox="0 0 36 36"><path d="M2 6 L14 4.3 V17 H2 Z M15.5 4.1 L34 1.6 V17 H15.5 Z M2 18.5 H14 V31.2 L2 29.5 Z M15.5 18.5 H34 V34 L15.5 31.4 Z" fill="#fff"/></svg><svg class="r" style="left:124px;top:1740px" width="40" height="40" viewBox="0 0 40 40"><circle cx="25" cy="15" r="10.2" fill="none" stroke="#fff" stroke-width="2"/><path d="M17.8 22.2 L4.5 35.5" stroke="#fff" stroke-width="2"/></svg><svg class="r" style="left:222px;top:1743px" width="36" height="34" viewBox="0 0 36 34"><path d="M3 2 V6 H21 V2 M3 32 V28 H21 V32" fill="none" stroke="#fff" stroke-width="2"/><rect x="3" y="10" width="18" height="14" fill="none" stroke="#fff" stroke-width="2.2"/><path d="M31 2 V32" stroke="#fff" stroke-width="2"/><circle cx="31" cy="17" r="3.2" fill="#fff"/></svg><svg class="r" style="left:321px;top:1744px" width="42" height="32" viewBox="0 0 42 32"><rect x="0" y="0" width="42" height="32" fill="#e9e9e9"/><rect x="0" y="0" width="42" height="2" fill="#bbb"/><rect x="10" y="5" width="18" height="23" fill="#0a78d7"/><path d="M2 6 H7 M2 9 H7 M2 12 H7 M2 15 H7 M2 18 H7" stroke="#888" stroke-width="1"/><path d="M30 7 H40 M30 10 H40 M30 13 H40 M30 16 H40 M30 19 H40" stroke="#999" stroke-width="1"/><rect x="0" y="0" width="42" height="32" fill="none" stroke="#c8c8c8" stroke-width="1"/></svg><svg class="r" style="left:419px;top:1744px" width="42" height="32" viewBox="0 0 42 32"><rect x="0" y="0" width="42" height="32" fill="#e9e9e9"/><rect x="0" y="0" width="42" height="2" fill="#bbb"/><rect x="10" y="5" width="18" height="23" fill="#0a78d7"/><path d="M2 6 H7 M2 9 H7 M2 12 H7 M2 15 H7 M2 18 H7" stroke="#888" stroke-width="1"/><path d="M30 7 H40 M30 10 H40 M30 13 H40 M30 16 H40 M30 19 H40" stroke="#999" stroke-width="1"/><rect x="0" y="0" width="42" height="32" fill="none" stroke="#c8c8c8" stroke-width="1"/></svg><svg class="r" style="left:513px;top:1749px" width="50" height="20" viewBox="0 0 50 20"><ellipse cx="25" cy="10" rx="23.5" ry="8.5" fill="#1a1a1e" stroke="#d01822" stroke-width="1.8"/><ellipse cx="25" cy="10" rx="20" ry="6.5" fill="none" stroke="#555" stroke-width="1"/><text x="7" y="13.5" font-family="Liberation Sans" font-weight="bold" font-size="9.5" fill="#e02030" textLength="22">ROWE</text><circle cx="37" cy="10" r="4.5" fill="#aaa"/><circle cx="37" cy="10" r="2" fill="#666"/></svg><svg class="r" style="left:611px;top:1747px" width="50" height="27" viewBox="0 0 50 27"><path d="M1 12.4 L10 2.4 H40.7 L49 12.4 H34.6 V24.7 L24.6 17 L15 24.7 V12.4 Z" fill="#1766a4" stroke="#e8eef8" stroke-width="1"/><path d="M24.6 3 V17 M24.6 3 L15.5 12.4 M24.6 3 L34 12.4" fill="none" stroke="#a8b8e0" stroke-width="1"/></svg><svg class="r" style="left:712px;top:1742px" width="44" height="36" viewBox="0 0 44 36"><path d="M1 3 Q1 1 3 1 H14 L18 4 H41 Q43 4 43 6 V32 Q43 34 41 34 H3 Q1 34 1 32 Z" fill="#f8d775"/><path d="M1 8 H43 V32 Q43 34 41 34 H3 Q1 34 1 32 Z" fill="#ffe48f"/><rect x="4" y="3" width="10" height="3" fill="#fff"/><rect x="4" y="3" width="2" height="3" fill="#3aa0e0"/><path d="M8 36 V19 Q8 17 10 17 H34 Q36 17 36 19 V36 H29 V24 H15 V36 Z" fill="#3fb4e5"/></svg><div class="r" style="left:596px;top:1796px;width:80px;height:4px;background:#76b9ed;"></div><div class="r" style="left:694px;top:1796px;width:62px;height:4px;background:#76b9ed;"></div><div class="r" style="left:756px;top:1796px;width:18px;height:4px;background:#5d8fbf;"></div><svg class="r" style="left:2376px;top:1744px" width="32" height="32" viewBox="0 0 32 32"><circle cx="21" cy="8" r="5" fill="none" stroke="#fff" stroke-width="2"/><path d="M13 19 Q15 13 21 13 Q27 13 29 20" fill="none" stroke="#fff" stroke-width="2"/><circle cx="10" cy="17" r="5" fill="none" stroke="#fff" stroke-width="2"/><path d="M1 31 Q3 23 10 23 Q17 23 19 31" fill="none" stroke="#fff" stroke-width="2"/></svg><svg class="r" style="left:2450px;top:1752px" width="28" height="16" viewBox="0 0 28 16"><path d="M2 14 L14 2 L26 14" fill="none" stroke="#fff" stroke-width="2"/></svg><svg class="r" style="left:2495px;top:1747px" width="36" height="30" viewBox="0 0 36 30"><path d="M5 28 V13 H9 M1 3 H33 V21 H25 M1 3 V13 H11 V3 M13 25 H20" fill="none" stroke="#fff" stroke-width="2"/><path d="M24 15 L32 29 H16 Z" fill="#f2c811"/><path d="M24 19 V24 M24 26 V27.5" stroke="#000" stroke-width="2"/></svg><svg class="r" style="left:2543px;top:1745px" width="34" height="30" viewBox="0 0 34 30"><path d="M2 10 H8 L15 3 V27 L8 20 H2 Z" fill="none" stroke="#fff" stroke-width="2"/><path d="M19 11 Q22 15 19 19 M23 7 Q29 15 23 23 M27 3 Q36 15 27 27" fill="none" stroke="#fff" stroke-width="2"/></svg><svg class="r" style="left:2590px;top:1745px" width="32" height="31" viewBox="0 0 32 31"><path d="M1 5 H31 M10 1 V9 M22 1 V9 M6 19 V11 H26 V19 M16 7 V19 C16 25 10 28 2 30 M1 20 H31 M16 20 C18 25 24 28 31 30" fill="none" stroke="#fff" stroke-width="2"/></svg><div class="t" style="left:2671.50px;top:1729.68px;font-size:24px;color:#fff;">13:29</div><div class="t" style="left:2636.00px;top:1766.68px;font-size:24px;color:#fff;transform:scale(1.0985,1.0000);transform-origin:0 20.32px;">2024/11/12</div><svg class="r" style="left:2796px;top:1742px" width="52" height="52" viewBox="0 0 52 52"><path d="M2 2 H35 V24 H14 L8 31 V24 H2 Z" fill="#fff"/><path d="M7 8 H30 M7 13 H30 M7 18 H24" stroke="#0a0d14" stroke-width="2"/><circle cx="32" cy="32" r="16.5" fill="#333" stroke="#777" stroke-width="1.5"/><text x="32" y="40" text-anchor="middle" font-family="Liberation Sans" font-weight="bold" font-size="22" fill="#fff">2</text></svg><div class="r" style="left:2871px;top:1720px;width:1px;height:80px;background:#3a3d44;"></div></body></html>
